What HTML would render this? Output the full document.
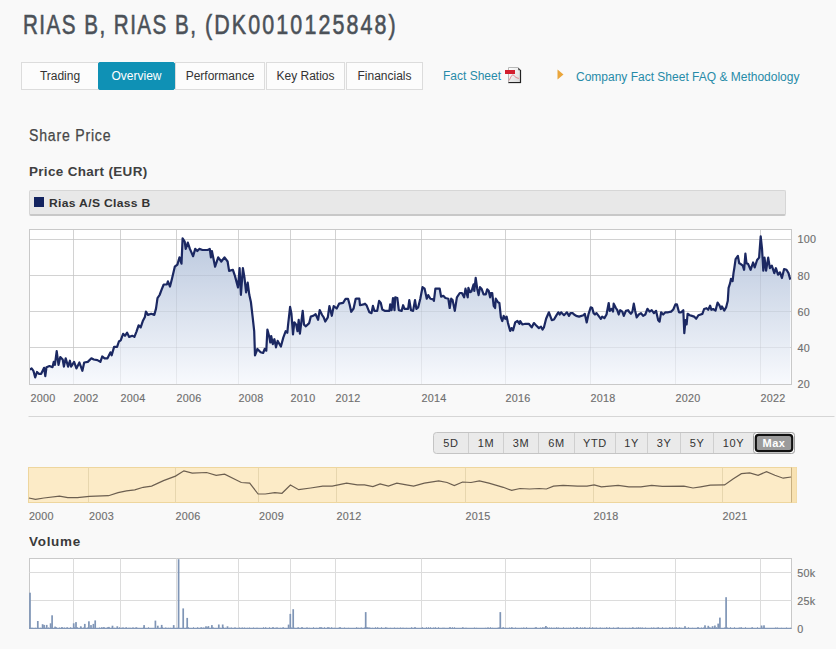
<!DOCTYPE html>
<html><head><meta charset="utf-8">
<style>
html,body{margin:0;padding:0;}
body{width:836px;height:649px;overflow:hidden;background:#f9f9f9;position:relative;font-family:"Liberation Sans",sans-serif;}
.a{position:absolute;white-space:nowrap;line-height:1;}
.ax{font-family:"Liberation Sans",sans-serif;font-size:10px;fill:#707070;letter-spacing:0.2px;stroke:#707070;stroke-width:0.15px;}
.bt{font-family:"Liberation Sans",sans-serif;font-size:11px;fill:#333;letter-spacing:0.6px;}
.mx{font-family:"Liberation Sans",sans-serif;font-size:11px;font-weight:bold;fill:#fff;letter-spacing:0.6px;}
.tab{position:absolute;top:62px;height:28px;box-sizing:border-box;border:1px solid #dcdcdc;background:#fcfcfc;font-size:12px;color:#333;text-align:center;line-height:27px;}
</style></head><body>
<div class="a" id="title" style="left:23px;top:10.5px;font-size:27.5px;color:#4b5158;letter-spacing:1.95px;transform:scaleX(0.75);transform-origin:0 0;-webkit-text-stroke:0.6px #4b5158;">RIAS B, RIAS B,</div><div class="a" style="left:205px;top:10.5px;font-size:27.5px;color:#4b5158;letter-spacing:2.7px;transform:scaleX(0.78);transform-origin:0 0;-webkit-text-stroke:0.6px #4b5158;">(DK0010125848)</div>
<div class="tab" style="left:21px;width:78px;">Trading</div>
<div class="tab" style="left:98px;width:77px;background:#0f91b5;border-color:#0f91b5;color:#fff;border-radius:2px;">Overview</div>
<div class="tab" style="left:175px;width:90px;">Performance</div>
<div class="tab" style="left:266px;width:79px;">Key Ratios</div>
<div class="tab" style="left:346px;width:77px;">Financials</div>
<div class="a" style="left:443px;top:70px;font-size:12px;color:#278ba8;">Fact Sheet</div>
<svg style="position:absolute;left:500px;top:62px" width="26" height="26" viewBox="0 0 26 26">
<defs><linearGradient id="pg" x1="0" y1="0" x2="1" y2="1"><stop offset="0" stop-color="#ffffff"/><stop offset="1" stop-color="#d9d9d9"/></linearGradient></defs>
<path d="M8.5,5.5 H18 L20.5,8 V20.5 H8.5 Z" fill="url(#pg)" stroke="#b8b8b8" stroke-width="1"/>
<path d="M20.5,8 V20.5 H8.5" fill="none" stroke="#222" stroke-width="1.2"/>
<path d="M18,5.5 L20.8,8.3 L18.5,8.3 Z" fill="#333"/>
<rect x="5" y="8" width="10" height="4" fill="#d21f2e"/>
<path d="M9.2,18.4 C10.5,15.5 12,12.5 13.2,12.8 C14,13.2 14.5,15.5 18.8,16.4" fill="none" stroke="#e0707a" stroke-width="0.9"/>
<rect x="8" y="21" width="13" height="1" fill="#ccc" opacity="0.6"/>
</svg>
<svg style="position:absolute;left:556px;top:68px" width="9" height="13" viewBox="0 0 9 13"><path d="M1.5,1.5 L7.5,6.5 L1.5,11.5 Z" fill="#eaa63c"/></svg>
<div class="a" style="left:576px;top:71px;font-size:12px;color:#278ba8;">Company Fact Sheet FAQ &amp; Methodology</div>
<div class="a" style="left:28.5px;top:127.5px;font-size:16px;color:#474747;letter-spacing:0.9px;transform:scaleX(0.88);transform-origin:0 0;-webkit-text-stroke:0.25px #474747;">Share Price</div>
<div class="a" style="left:29px;top:166px;font-size:12px;font-weight:bold;color:#404040;letter-spacing:0.3px;transform:scaleX(1.12);transform-origin:0 0;">Price Chart (EUR)</div>
<div style="position:absolute;left:29px;top:190px;width:757px;height:26px;box-sizing:border-box;background:#e8e8e8;border:1px solid #d6d6d6;border-bottom:2px solid #c8c8c8;border-radius:2px;"></div>
<div style="position:absolute;left:34px;top:197px;width:10px;height:10px;background:#13235f;"></div>
<div class="a" style="left:48.5px;top:198px;font-size:11px;font-weight:bold;color:#333;letter-spacing:0.3px;transform:scaleX(1.1);transform-origin:0 0;">Rias A/S Class B</div>
<div class="a" style="left:29px;top:536px;font-size:12px;font-weight:bold;color:#3a3a3a;letter-spacing:0.65px;transform:scaleX(1.12);transform-origin:0 0;">Volume</div>
<svg style="position:absolute;left:0;top:0" width="836" height="649" viewBox="0 0 836 649">
<defs><linearGradient id="g1" x1="0" y1="236" x2="0" y2="384" gradientUnits="userSpaceOnUse"><stop offset="0" stop-color="#b3c2da"/><stop offset="1" stop-color="#f7f9fd"/></linearGradient></defs>
<rect x="29.5" y="229.5" width="762.0" height="155.0" fill="#fff" stroke="#c9c9c9" stroke-width="1"/>
<line x1="73.5" y1="229.5" x2="73.5" y2="384.5" stroke="#dcdcdc" stroke-width="1"/>
<line x1="120.5" y1="229.5" x2="120.5" y2="384.5" stroke="#dcdcdc" stroke-width="1"/>
<line x1="176.5" y1="229.5" x2="176.5" y2="384.5" stroke="#dcdcdc" stroke-width="1"/>
<line x1="238.5" y1="229.5" x2="238.5" y2="384.5" stroke="#dcdcdc" stroke-width="1"/>
<line x1="290.5" y1="229.5" x2="290.5" y2="384.5" stroke="#dcdcdc" stroke-width="1"/>
<line x1="335.5" y1="229.5" x2="335.5" y2="384.5" stroke="#dcdcdc" stroke-width="1"/>
<line x1="421.5" y1="229.5" x2="421.5" y2="384.5" stroke="#dcdcdc" stroke-width="1"/>
<line x1="505.5" y1="229.5" x2="505.5" y2="384.5" stroke="#dcdcdc" stroke-width="1"/>
<line x1="590.5" y1="229.5" x2="590.5" y2="384.5" stroke="#dcdcdc" stroke-width="1"/>
<line x1="675.5" y1="229.5" x2="675.5" y2="384.5" stroke="#dcdcdc" stroke-width="1"/>
<line x1="760.5" y1="229.5" x2="760.5" y2="384.5" stroke="#dcdcdc" stroke-width="1"/>
<line x1="29.5" y1="239.5" x2="791.5" y2="239.5" stroke="#dcdcdc" stroke-width="1"/>
<line x1="29.5" y1="275.5" x2="791.5" y2="275.5" stroke="#dcdcdc" stroke-width="1"/>
<line x1="29.5" y1="311.5" x2="791.5" y2="311.5" stroke="#dcdcdc" stroke-width="1"/>
<line x1="29.5" y1="347.5" x2="791.5" y2="347.5" stroke="#dcdcdc" stroke-width="1"/>
<path d="M29.8,369.6 L31.6,368.4 L33.4,370.8 L35.2,377.4 L37.0,372.0 L38.8,373.8 L41.2,373.8 L44.1,367.8 L45.3,376.2 L46.5,367.2 L49.5,366.0 L52.5,367.2 L53.7,361.9 L54.9,364.9 L56.7,351.1 L58.5,364.9 L60.3,357.1 L62.7,359.5 L63.9,366.6 L65.7,358.3 L68.1,366.6 L69.9,360.7 L71.1,366.6 L74.1,361.9 L76.4,368.4 L79.4,362.5 L82.4,370.8 L84.2,362.5 L87.8,361.9 L91.4,358.3 L93.8,359.5 L97.4,360.1 L100.4,361.9 L102.2,356.5 L104.6,358.3 L107.5,358.3 L110.5,352.3 L111.7,355.3 L114.1,346.9 L117.1,346.9 L118.9,341.5 L120.7,340.3 L123.1,333.8 L125.0,335.8 L127.1,332.7 L129.2,336.9 L132.3,335.8 L134.4,336.9 L136.5,331.6 L138.6,325.3 L140.7,327.4 L142.8,321.1 L144.9,317.0 L145.9,311.7 L148.0,314.9 L151.2,313.8 L154.3,314.9 L156.0,308.6 L157.5,298.1 L159.6,295.0 L161.6,289.7 L163.7,284.5 L166.9,284.5 L167.9,281.4 L170.0,286.6 L172.1,278.2 L174.8,266.7 L177.4,264.6 L179.5,257.3 L181.5,263.6 L182.6,238.4 L184.7,241.6 L185.7,248.9 L187.8,242.6 L189.9,248.9 L193.1,256.2 L195.2,248.9 L197.3,251.0 L199.3,248.9 L202.5,250.0 L207.7,250.0 L209.8,248.9 L210.9,257.3 L211.9,251.0 L215.1,266.7 L218.2,257.3 L221.3,261.5 L224.5,257.3 L227.6,261.5 L229.1,270.9 L232.9,269.8 L235.0,276.1 L238.0,287.5 L239.6,268.1 L240.9,294.8 L242.9,268.1 L244.5,277.8 L246.1,292.3 L247.7,282.6 L249.3,294.8 L250.9,302.0 L252.6,316.6 L254.2,331.2 L255.0,355.4 L257.4,349.0 L260.6,352.2 L263.1,353.0 L264.7,349.0 L266.3,350.6 L267.4,329.5 L269.1,336.0 L270.3,342.5 L271.2,336.0 L272.8,344.1 L274.4,339.2 L276.0,347.3 L277.6,340.9 L280.9,346.5 L283.3,337.6 L285.7,331.2 L287.3,332.8 L288.1,324.7 L290.1,306.9 L291.4,313.4 L293.0,334.4 L294.3,322.3 L296.2,324.7 L297.5,331.2 L298.7,319.8 L299.9,333.6 L301.4,321.5 L302.7,310.9 L304.0,324.7 L305.9,326.3 L309.2,323.1 L310.8,316.6 L313.2,315.8 L315.6,314.2 L318.1,319.8 L319.7,310.1 L322.1,315.0 L323.7,317.4 L325.3,321.5 L327.8,317.4 L329.4,306.1 L331.8,315.8 L333.7,306.1 L336.7,308.5 L339.1,303.7 L343.1,302.9 L345.6,298.8 L348.0,298.8 L349.6,304.5 L351.2,311.8 L353.6,308.5 L355.7,298.8 L356.4,298.7 L359.3,298.7 L360.0,305.2 L363.6,304.4 L365.0,303.7 L366.5,305.2 L369.4,312.3 L371.5,313.1 L372.9,305.9 L374.4,310.9 L377.2,310.9 L379.1,300.9 L380.8,303.0 L382.3,309.5 L385.1,310.9 L389.4,310.9 L390.2,304.4 L391.6,310.2 L393.0,298.0 L394.5,310.2 L395.2,297.3 L397.3,298.0 L398.8,310.2 L401.6,310.9 L403.1,305.2 L404.5,308.8 L408.1,308.8 L409.3,300.1 L411.0,310.2 L413.1,310.9 L415.0,300.1 L416.4,308.8 L418.2,307.3 L420.3,298.7 L422.5,287.2 L424.6,288.7 L426.8,298.7 L428.2,295.1 L430.4,298.7 L433.2,299.4 L433.9,300.9 L435.4,288.7 L439.7,288.7 L441.1,296.6 L443.3,295.8 L445.4,298.0 L448.3,298.7 L449.7,308.0 L451.2,298.7 L452.6,300.1 L454.8,310.9 L456.9,297.3 L459.8,293.0 L461.9,293.0 L464.1,297.3 L465.5,288.7 L467.7,297.3 L468.4,287.9 L470.0,292.2 L471.4,291.5 L473.6,284.4 L474.3,290.8 L475.7,277.9 L477.2,288.7 L478.6,295.1 L480.0,287.2 L481.5,288.7 L483.6,294.4 L485.8,294.4 L487.2,289.4 L488.7,290.8 L490.1,297.3 L490.8,293.0 L492.2,293.0 L493.7,305.9 L495.1,308.0 L495.8,298.7 L498.0,302.3 L499.4,303.0 L500.9,317.4 L502.3,321.0 L503.7,315.9 L505.2,318.8 L506.6,316.6 L508.0,323.1 L510.2,331.0 L511.6,328.1 L513.1,330.3 L515.2,322.4 L517.4,321.0 L519.5,323.8 L520.2,321.0 L522.4,324.5 L525.3,323.8 L528.8,323.8 L531.7,327.4 L533.9,323.1 L536.0,325.3 L538.9,328.1 L541.0,326.7 L542.5,329.6 L543.9,327.4 L546.1,318.8 L548.9,312.3 L551.8,320.2 L554.0,319.5 L556.1,315.9 L558.3,312.3 L559.7,314.5 L561.1,312.3 L564.0,315.2 L566.9,312.3 L569.0,315.9 L570.5,313.1 L572.6,313.1 L574.1,314.5 L576.2,315.9 L579.1,316.6 L583.4,315.2 L584.8,313.8 L586.7,322.4 L588.6,313.8 L590.7,307.3 L592.2,308.0 L593.6,313.1 L595.0,314.5 L596.5,313.1 L598.6,315.9 L600.8,318.8 L602.2,316.6 L604.4,318.1 L606.5,314.5 L608.7,303.0 L609.7,310.9 L611.6,308.8 L613.0,311.6 L613.7,303.7 L615.9,308.0 L617.3,310.2 L618.7,314.5 L620.2,310.2 L622.3,311.6 L623.8,315.9 L625.9,310.9 L628.1,310.2 L629.5,312.3 L630.9,313.8 L632.4,311.6 L633.8,303.7 L635.2,310.9 L636.7,317.4 L638.8,314.5 L641.0,313.1 L643.1,315.9 L645.3,314.5 L647.4,308.8 L649.6,311.6 L651.7,310.2 L653.9,313.1 L656.1,310.9 L658.2,320.2 L659.6,321.7 L661.1,312.3 L663.2,314.5 L665.4,312.3 L668.2,312.3 L671.1,311.6 L673.3,309.5 L675.4,304.4 L676.9,304.4 L679.0,312.3 L681.2,312.3 L683.3,310.2 L684.3,333.2 L685.5,320.2 L686.6,324.5 L687.6,313.8 L689.8,315.2 L691.9,315.9 L694.1,316.6 L696.2,318.8 L698.4,315.2 L700.0,314.7 L702.4,313.9 L704.1,309.0 L706.5,308.2 L708.2,309.8 L710.1,305.7 L711.4,309.8 L713.1,309.0 L715.5,310.6 L717.6,302.5 L719.6,305.7 L720.9,309.0 L722.0,306.5 L724.2,310.6 L726.1,307.4 L727.8,300.8 L728.6,287.8 L730.2,282.9 L731.0,278.8 L732.6,281.2 L733.5,273.1 L734.3,268.2 L735.6,259.2 L737.9,255.9 L739.2,263.3 L740.8,264.1 L742.8,265.7 L744.1,269.8 L745.4,253.5 L746.5,263.3 L748.2,264.1 L750.6,269.8 L753.1,262.5 L754.7,267.4 L757.1,260.0 L759.1,257.6 L760.7,236.3 L762.0,248.6 L763.3,270.6 L764.5,257.6 L766.1,270.6 L768.2,257.6 L769.9,268.2 L771.8,265.7 L774.3,273.1 L775.9,268.2 L778.0,274.7 L780.0,272.3 L781.9,278.0 L784.1,269.0 L786.5,269.8 L788.5,273.1 L790.3,279.6 L790.3,384 L29.8,384 Z" fill="url(#g1)" fill-opacity="0.9"/>
<line x1="73.5" y1="229.5" x2="73.5" y2="384.5" stroke="#000" stroke-opacity="0.045" stroke-width="1"/>
<line x1="120.5" y1="229.5" x2="120.5" y2="384.5" stroke="#000" stroke-opacity="0.045" stroke-width="1"/>
<line x1="176.5" y1="229.5" x2="176.5" y2="384.5" stroke="#000" stroke-opacity="0.045" stroke-width="1"/>
<line x1="238.5" y1="229.5" x2="238.5" y2="384.5" stroke="#000" stroke-opacity="0.045" stroke-width="1"/>
<line x1="290.5" y1="229.5" x2="290.5" y2="384.5" stroke="#000" stroke-opacity="0.045" stroke-width="1"/>
<line x1="335.5" y1="229.5" x2="335.5" y2="384.5" stroke="#000" stroke-opacity="0.045" stroke-width="1"/>
<line x1="421.5" y1="229.5" x2="421.5" y2="384.5" stroke="#000" stroke-opacity="0.045" stroke-width="1"/>
<line x1="505.5" y1="229.5" x2="505.5" y2="384.5" stroke="#000" stroke-opacity="0.045" stroke-width="1"/>
<line x1="590.5" y1="229.5" x2="590.5" y2="384.5" stroke="#000" stroke-opacity="0.045" stroke-width="1"/>
<line x1="675.5" y1="229.5" x2="675.5" y2="384.5" stroke="#000" stroke-opacity="0.045" stroke-width="1"/>
<line x1="760.5" y1="229.5" x2="760.5" y2="384.5" stroke="#000" stroke-opacity="0.045" stroke-width="1"/>
<line x1="29.5" y1="239.5" x2="791.5" y2="239.5" stroke="#000" stroke-opacity="0.045" stroke-width="1"/>
<line x1="29.5" y1="275.5" x2="791.5" y2="275.5" stroke="#000" stroke-opacity="0.045" stroke-width="1"/>
<line x1="29.5" y1="311.5" x2="791.5" y2="311.5" stroke="#000" stroke-opacity="0.045" stroke-width="1"/>
<line x1="29.5" y1="347.5" x2="791.5" y2="347.5" stroke="#000" stroke-opacity="0.045" stroke-width="1"/>
<path d="M29.8,369.6 L31.6,368.4 L33.4,370.8 L35.2,377.4 L37.0,372.0 L38.8,373.8 L41.2,373.8 L44.1,367.8 L45.3,376.2 L46.5,367.2 L49.5,366.0 L52.5,367.2 L53.7,361.9 L54.9,364.9 L56.7,351.1 L58.5,364.9 L60.3,357.1 L62.7,359.5 L63.9,366.6 L65.7,358.3 L68.1,366.6 L69.9,360.7 L71.1,366.6 L74.1,361.9 L76.4,368.4 L79.4,362.5 L82.4,370.8 L84.2,362.5 L87.8,361.9 L91.4,358.3 L93.8,359.5 L97.4,360.1 L100.4,361.9 L102.2,356.5 L104.6,358.3 L107.5,358.3 L110.5,352.3 L111.7,355.3 L114.1,346.9 L117.1,346.9 L118.9,341.5 L120.7,340.3 L123.1,333.8 L125.0,335.8 L127.1,332.7 L129.2,336.9 L132.3,335.8 L134.4,336.9 L136.5,331.6 L138.6,325.3 L140.7,327.4 L142.8,321.1 L144.9,317.0 L145.9,311.7 L148.0,314.9 L151.2,313.8 L154.3,314.9 L156.0,308.6 L157.5,298.1 L159.6,295.0 L161.6,289.7 L163.7,284.5 L166.9,284.5 L167.9,281.4 L170.0,286.6 L172.1,278.2 L174.8,266.7 L177.4,264.6 L179.5,257.3 L181.5,263.6 L182.6,238.4 L184.7,241.6 L185.7,248.9 L187.8,242.6 L189.9,248.9 L193.1,256.2 L195.2,248.9 L197.3,251.0 L199.3,248.9 L202.5,250.0 L207.7,250.0 L209.8,248.9 L210.9,257.3 L211.9,251.0 L215.1,266.7 L218.2,257.3 L221.3,261.5 L224.5,257.3 L227.6,261.5 L229.1,270.9 L232.9,269.8 L235.0,276.1 L238.0,287.5 L239.6,268.1 L240.9,294.8 L242.9,268.1 L244.5,277.8 L246.1,292.3 L247.7,282.6 L249.3,294.8 L250.9,302.0 L252.6,316.6 L254.2,331.2 L255.0,355.4 L257.4,349.0 L260.6,352.2 L263.1,353.0 L264.7,349.0 L266.3,350.6 L267.4,329.5 L269.1,336.0 L270.3,342.5 L271.2,336.0 L272.8,344.1 L274.4,339.2 L276.0,347.3 L277.6,340.9 L280.9,346.5 L283.3,337.6 L285.7,331.2 L287.3,332.8 L288.1,324.7 L290.1,306.9 L291.4,313.4 L293.0,334.4 L294.3,322.3 L296.2,324.7 L297.5,331.2 L298.7,319.8 L299.9,333.6 L301.4,321.5 L302.7,310.9 L304.0,324.7 L305.9,326.3 L309.2,323.1 L310.8,316.6 L313.2,315.8 L315.6,314.2 L318.1,319.8 L319.7,310.1 L322.1,315.0 L323.7,317.4 L325.3,321.5 L327.8,317.4 L329.4,306.1 L331.8,315.8 L333.7,306.1 L336.7,308.5 L339.1,303.7 L343.1,302.9 L345.6,298.8 L348.0,298.8 L349.6,304.5 L351.2,311.8 L353.6,308.5 L355.7,298.8 L356.4,298.7 L359.3,298.7 L360.0,305.2 L363.6,304.4 L365.0,303.7 L366.5,305.2 L369.4,312.3 L371.5,313.1 L372.9,305.9 L374.4,310.9 L377.2,310.9 L379.1,300.9 L380.8,303.0 L382.3,309.5 L385.1,310.9 L389.4,310.9 L390.2,304.4 L391.6,310.2 L393.0,298.0 L394.5,310.2 L395.2,297.3 L397.3,298.0 L398.8,310.2 L401.6,310.9 L403.1,305.2 L404.5,308.8 L408.1,308.8 L409.3,300.1 L411.0,310.2 L413.1,310.9 L415.0,300.1 L416.4,308.8 L418.2,307.3 L420.3,298.7 L422.5,287.2 L424.6,288.7 L426.8,298.7 L428.2,295.1 L430.4,298.7 L433.2,299.4 L433.9,300.9 L435.4,288.7 L439.7,288.7 L441.1,296.6 L443.3,295.8 L445.4,298.0 L448.3,298.7 L449.7,308.0 L451.2,298.7 L452.6,300.1 L454.8,310.9 L456.9,297.3 L459.8,293.0 L461.9,293.0 L464.1,297.3 L465.5,288.7 L467.7,297.3 L468.4,287.9 L470.0,292.2 L471.4,291.5 L473.6,284.4 L474.3,290.8 L475.7,277.9 L477.2,288.7 L478.6,295.1 L480.0,287.2 L481.5,288.7 L483.6,294.4 L485.8,294.4 L487.2,289.4 L488.7,290.8 L490.1,297.3 L490.8,293.0 L492.2,293.0 L493.7,305.9 L495.1,308.0 L495.8,298.7 L498.0,302.3 L499.4,303.0 L500.9,317.4 L502.3,321.0 L503.7,315.9 L505.2,318.8 L506.6,316.6 L508.0,323.1 L510.2,331.0 L511.6,328.1 L513.1,330.3 L515.2,322.4 L517.4,321.0 L519.5,323.8 L520.2,321.0 L522.4,324.5 L525.3,323.8 L528.8,323.8 L531.7,327.4 L533.9,323.1 L536.0,325.3 L538.9,328.1 L541.0,326.7 L542.5,329.6 L543.9,327.4 L546.1,318.8 L548.9,312.3 L551.8,320.2 L554.0,319.5 L556.1,315.9 L558.3,312.3 L559.7,314.5 L561.1,312.3 L564.0,315.2 L566.9,312.3 L569.0,315.9 L570.5,313.1 L572.6,313.1 L574.1,314.5 L576.2,315.9 L579.1,316.6 L583.4,315.2 L584.8,313.8 L586.7,322.4 L588.6,313.8 L590.7,307.3 L592.2,308.0 L593.6,313.1 L595.0,314.5 L596.5,313.1 L598.6,315.9 L600.8,318.8 L602.2,316.6 L604.4,318.1 L606.5,314.5 L608.7,303.0 L609.7,310.9 L611.6,308.8 L613.0,311.6 L613.7,303.7 L615.9,308.0 L617.3,310.2 L618.7,314.5 L620.2,310.2 L622.3,311.6 L623.8,315.9 L625.9,310.9 L628.1,310.2 L629.5,312.3 L630.9,313.8 L632.4,311.6 L633.8,303.7 L635.2,310.9 L636.7,317.4 L638.8,314.5 L641.0,313.1 L643.1,315.9 L645.3,314.5 L647.4,308.8 L649.6,311.6 L651.7,310.2 L653.9,313.1 L656.1,310.9 L658.2,320.2 L659.6,321.7 L661.1,312.3 L663.2,314.5 L665.4,312.3 L668.2,312.3 L671.1,311.6 L673.3,309.5 L675.4,304.4 L676.9,304.4 L679.0,312.3 L681.2,312.3 L683.3,310.2 L684.3,333.2 L685.5,320.2 L686.6,324.5 L687.6,313.8 L689.8,315.2 L691.9,315.9 L694.1,316.6 L696.2,318.8 L698.4,315.2 L700.0,314.7 L702.4,313.9 L704.1,309.0 L706.5,308.2 L708.2,309.8 L710.1,305.7 L711.4,309.8 L713.1,309.0 L715.5,310.6 L717.6,302.5 L719.6,305.7 L720.9,309.0 L722.0,306.5 L724.2,310.6 L726.1,307.4 L727.8,300.8 L728.6,287.8 L730.2,282.9 L731.0,278.8 L732.6,281.2 L733.5,273.1 L734.3,268.2 L735.6,259.2 L737.9,255.9 L739.2,263.3 L740.8,264.1 L742.8,265.7 L744.1,269.8 L745.4,253.5 L746.5,263.3 L748.2,264.1 L750.6,269.8 L753.1,262.5 L754.7,267.4 L757.1,260.0 L759.1,257.6 L760.7,236.3 L762.0,248.6 L763.3,270.6 L764.5,257.6 L766.1,270.6 L768.2,257.6 L769.9,268.2 L771.8,265.7 L774.3,273.1 L775.9,268.2 L778.0,274.7 L780.0,272.3 L781.9,278.0 L784.1,269.0 L786.5,269.8 L788.5,273.1 L790.3,279.6" fill="none" stroke="#1b2862" stroke-width="2.2" stroke-linejoin="round"/>
<rect x="29.5" y="229.5" width="762.0" height="155.0" fill="none" stroke="#c9c9c9" stroke-width="1"/>
<text transform="translate(30.5,401.8) scale(1.08,1)" class="ax">2000</text>
<text transform="translate(73.5,401.8) scale(1.08,1)" class="ax">2002</text>
<text transform="translate(120.5,401.8) scale(1.08,1)" class="ax">2004</text>
<text transform="translate(176.5,401.8) scale(1.08,1)" class="ax">2006</text>
<text transform="translate(238.5,401.8) scale(1.08,1)" class="ax">2008</text>
<text transform="translate(290.5,401.8) scale(1.08,1)" class="ax">2010</text>
<text transform="translate(335.5,401.8) scale(1.08,1)" class="ax">2012</text>
<text transform="translate(421.5,401.8) scale(1.08,1)" class="ax">2014</text>
<text transform="translate(505.5,401.8) scale(1.08,1)" class="ax">2016</text>
<text transform="translate(590.5,401.8) scale(1.08,1)" class="ax">2018</text>
<text transform="translate(675.5,401.8) scale(1.08,1)" class="ax">2020</text>
<text transform="translate(760.5,401.8) scale(1.08,1)" class="ax">2022</text>
<text transform="translate(797.5,243.3) scale(1.08,1)" class="ax">100</text>
<text transform="translate(797.5,279.6) scale(1.08,1)" class="ax">80</text>
<text transform="translate(797.5,315.9) scale(1.08,1)" class="ax">60</text>
<text transform="translate(797.5,351.9) scale(1.08,1)" class="ax">40</text>
<text transform="translate(797.5,388) scale(1.08,1)" class="ax">20</text>
<line x1="28.5" y1="416.5" x2="834.5" y2="416.5" stroke="#d6d6d6" stroke-width="1"/>
<rect x="28.5" y="467.5" width="768.0" height="35.0" fill="#fcebc7" stroke="#eed69e" stroke-width="1"/>
<rect x="791" y="467.5" width="5.5" height="35.0" fill="#f8e2b2"/>
<line x1="791.5" y1="467.5" x2="791.5" y2="502.5" stroke="#c8b080" stroke-width="1"/>
<line x1="88.5" y1="467.5" x2="88.5" y2="502.5" stroke="#e7d6ae" stroke-width="1"/>
<line x1="175.5" y1="467.5" x2="175.5" y2="502.5" stroke="#e7d6ae" stroke-width="1"/>
<line x1="258.5" y1="467.5" x2="258.5" y2="502.5" stroke="#e7d6ae" stroke-width="1"/>
<line x1="336.5" y1="467.5" x2="336.5" y2="502.5" stroke="#e7d6ae" stroke-width="1"/>
<line x1="465.5" y1="467.5" x2="465.5" y2="502.5" stroke="#e7d6ae" stroke-width="1"/>
<line x1="593.5" y1="467.5" x2="593.5" y2="502.5" stroke="#e7d6ae" stroke-width="1"/>
<line x1="722.5" y1="467.5" x2="722.5" y2="502.5" stroke="#e7d6ae" stroke-width="1"/>
<path d="M28.9,498.0 L35.5,499.3 L43.9,498.0 L59.5,496.1 L67.8,497.6 L77.4,497.6 L89.4,496.4 L108.5,495.7 L118.1,492.6 L126.5,490.9 L134.8,489.9 L143.2,487.3 L151.6,486.1 L163.5,480.6 L175.5,476.1 L183.9,470.8 L192.2,473.2 L206.6,472.5 L216.2,475.3 L224.6,474.1 L241.3,482.5 L249.7,483.2 L258.1,494.0 L265.2,494.0 L274.8,492.6 L282.0,493.3 L290.4,485.1 L298.7,489.7 L310.7,488.0 L322.7,486.1 L332.2,486.1 L338.2,484.9 L346.6,483.2 L357.3,484.9 L364.5,484.9 L372.9,486.6 L380.1,483.9 L388.4,486.1 L396.8,483.2 L406.4,484.9 L413.6,486.1 L424.4,483.2 L438.7,480.8 L447.1,482.5 L454.3,485.6 L462.6,482.0 L471.0,482.5 L479.4,480.8 L488.9,483.2 L503.3,487.3 L511.7,490.4 L520.0,488.5 L529.6,489.0 L539.2,488.5 L546.4,489.0 L553.5,486.1 L563.1,485.4 L577.5,486.1 L587.0,486.1 L594.2,484.9 L601.4,486.8 L618.2,485.4 L628.9,486.8 L640.9,486.8 L651.7,485.4 L662.4,486.3 L683.9,486.1 L693.0,488.0 L700.7,486.8 L710.3,485.1 L724.6,484.9 L733.0,478.9 L741.4,473.7 L749.7,472.9 L758.1,475.3 L766.5,471.7 L774.9,475.3 L783.2,478.2 L791.1,477.0" fill="none" stroke="#6c5f50" stroke-width="1.2"/>
<text transform="translate(28.9,520) scale(1.08,1)" class="ax">2000</text>
<text transform="translate(89,520) scale(1.08,1)" class="ax">2003</text>
<text transform="translate(175.5,520) scale(1.08,1)" class="ax">2006</text>
<text transform="translate(259,520) scale(1.08,1)" class="ax">2009</text>
<text transform="translate(336.5,520) scale(1.08,1)" class="ax">2012</text>
<text transform="translate(465.5,520) scale(1.08,1)" class="ax">2015</text>
<text transform="translate(593.5,520) scale(1.08,1)" class="ax">2018</text>
<text transform="translate(722.5,520) scale(1.08,1)" class="ax">2021</text>
<rect x="29.5" y="558.5" width="762.0" height="70.0" fill="#fff" stroke="#c9c9c9" stroke-width="1"/>
<line x1="73.5" y1="558.5" x2="73.5" y2="628.5" stroke="#dcdcdc" stroke-width="1"/>
<line x1="120.5" y1="558.5" x2="120.5" y2="628.5" stroke="#dcdcdc" stroke-width="1"/>
<line x1="176.5" y1="558.5" x2="176.5" y2="628.5" stroke="#dcdcdc" stroke-width="1"/>
<line x1="238.5" y1="558.5" x2="238.5" y2="628.5" stroke="#dcdcdc" stroke-width="1"/>
<line x1="290.5" y1="558.5" x2="290.5" y2="628.5" stroke="#dcdcdc" stroke-width="1"/>
<line x1="335.5" y1="558.5" x2="335.5" y2="628.5" stroke="#dcdcdc" stroke-width="1"/>
<line x1="421.5" y1="558.5" x2="421.5" y2="628.5" stroke="#dcdcdc" stroke-width="1"/>
<line x1="505.5" y1="558.5" x2="505.5" y2="628.5" stroke="#dcdcdc" stroke-width="1"/>
<line x1="590.5" y1="558.5" x2="590.5" y2="628.5" stroke="#dcdcdc" stroke-width="1"/>
<line x1="675.5" y1="558.5" x2="675.5" y2="628.5" stroke="#dcdcdc" stroke-width="1"/>
<line x1="760.5" y1="558.5" x2="760.5" y2="628.5" stroke="#dcdcdc" stroke-width="1"/>
<line x1="29.5" y1="572.5" x2="791.5" y2="572.5" stroke="#dcdcdc" stroke-width="1"/>
<line x1="29.5" y1="600.5" x2="791.5" y2="600.5" stroke="#dcdcdc" stroke-width="1"/>
<rect x="30" y="628.2" width="1" height="0.8" fill="#8a9ebe"/>
<rect x="31" y="627.8" width="1" height="1.2" fill="#8a9ebe"/>
<rect x="32" y="627.8" width="1" height="1.2" fill="#8a9ebe"/>
<rect x="33" y="628.2" width="1" height="0.8" fill="#8a9ebe"/>
<rect x="34" y="628.0" width="1" height="1" fill="#8a9ebe"/>
<rect x="35" y="627.8" width="1" height="1.2" fill="#8a9ebe"/>
<rect x="36" y="628.0" width="1" height="1" fill="#8a9ebe"/>
<rect x="37" y="627.5" width="1" height="1.5" fill="#8a9ebe"/>
<rect x="38" y="627.8" width="1" height="1.2" fill="#8a9ebe"/>
<rect x="39" y="628.4" width="1" height="0.6" fill="#8a9ebe"/>
<rect x="40" y="627.8" width="1" height="1.2" fill="#8a9ebe"/>
<rect x="41" y="628.4" width="1" height="0.6" fill="#8a9ebe"/>
<rect x="42" y="627.2" width="1" height="1.8" fill="#8a9ebe"/>
<rect x="43" y="628.0" width="1" height="1" fill="#8a9ebe"/>
<rect x="44" y="628.0" width="1" height="1" fill="#8a9ebe"/>
<rect x="45" y="627.8" width="1" height="1.2" fill="#8a9ebe"/>
<rect x="46" y="628.2" width="1" height="0.8" fill="#8a9ebe"/>
<rect x="47" y="628.2" width="1" height="0.8" fill="#8a9ebe"/>
<rect x="48" y="627.5" width="1" height="1.5" fill="#8a9ebe"/>
<rect x="49" y="628.0" width="1" height="1" fill="#8a9ebe"/>
<rect x="50" y="627.8" width="1" height="1.2" fill="#8a9ebe"/>
<rect x="51" y="627.2" width="1" height="1.8" fill="#8a9ebe"/>
<rect x="52" y="627.8" width="1" height="1.2" fill="#8a9ebe"/>
<rect x="53" y="628.0" width="1" height="1" fill="#8a9ebe"/>
<rect x="54" y="628.0" width="1" height="1" fill="#8a9ebe"/>
<rect x="55" y="627.5" width="1" height="1.5" fill="#8a9ebe"/>
<rect x="56" y="627.2" width="1" height="1.8" fill="#8a9ebe"/>
<rect x="57" y="628.2" width="1" height="0.8" fill="#8a9ebe"/>
<rect x="58" y="628.2" width="1" height="0.8" fill="#8a9ebe"/>
<rect x="59" y="627.5" width="1" height="1.5" fill="#8a9ebe"/>
<rect x="60" y="628.2" width="1" height="0.8" fill="#8a9ebe"/>
<rect x="61" y="627.2" width="1" height="1.8" fill="#8a9ebe"/>
<rect x="62" y="627.8" width="1" height="1.2" fill="#8a9ebe"/>
<rect x="63" y="628.0" width="1" height="1" fill="#8a9ebe"/>
<rect x="64" y="627.5" width="1" height="1.5" fill="#8a9ebe"/>
<rect x="65" y="628.4" width="1" height="0.6" fill="#8a9ebe"/>
<rect x="66" y="627.5" width="1" height="1.5" fill="#8a9ebe"/>
<rect x="67" y="627.2" width="1" height="1.8" fill="#8a9ebe"/>
<rect x="68" y="628.4" width="1" height="0.6" fill="#8a9ebe"/>
<rect x="69" y="628.2" width="1" height="0.8" fill="#8a9ebe"/>
<rect x="70" y="627.2" width="1" height="1.8" fill="#8a9ebe"/>
<rect x="71" y="627.8" width="1" height="1.2" fill="#8a9ebe"/>
<rect x="72" y="628.4" width="1" height="0.6" fill="#8a9ebe"/>
<rect x="73" y="628.0" width="1" height="1" fill="#8a9ebe"/>
<rect x="74" y="627.2" width="1" height="1.8" fill="#8a9ebe"/>
<rect x="75" y="628.4" width="1" height="0.6" fill="#8a9ebe"/>
<rect x="76" y="627.2" width="1" height="1.8" fill="#8a9ebe"/>
<rect x="77" y="627.2" width="1" height="1.8" fill="#8a9ebe"/>
<rect x="78" y="628.0" width="1" height="1" fill="#8a9ebe"/>
<rect x="79" y="628.0" width="1" height="1" fill="#8a9ebe"/>
<rect x="80" y="627.8" width="1" height="1.2" fill="#8a9ebe"/>
<rect x="81" y="627.5" width="1" height="1.5" fill="#8a9ebe"/>
<rect x="82" y="628.0" width="1" height="1" fill="#8a9ebe"/>
<rect x="83" y="627.5" width="1" height="1.5" fill="#8a9ebe"/>
<rect x="84" y="627.2" width="1" height="1.8" fill="#8a9ebe"/>
<rect x="85" y="628.0" width="1" height="1" fill="#8a9ebe"/>
<rect x="86" y="628.0" width="1" height="1" fill="#8a9ebe"/>
<rect x="87" y="627.5" width="1" height="1.5" fill="#8a9ebe"/>
<rect x="88" y="627.2" width="1" height="1.8" fill="#8a9ebe"/>
<rect x="89" y="627.8" width="1" height="1.2" fill="#8a9ebe"/>
<rect x="90" y="628.0" width="1" height="1" fill="#8a9ebe"/>
<rect x="91" y="628.2" width="1" height="0.8" fill="#8a9ebe"/>
<rect x="92" y="628.0" width="1" height="1" fill="#8a9ebe"/>
<rect x="93" y="628.4" width="1" height="0.6" fill="#8a9ebe"/>
<rect x="94" y="628.4" width="1" height="0.6" fill="#8a9ebe"/>
<rect x="95" y="628.2" width="1" height="0.8" fill="#8a9ebe"/>
<rect x="96" y="628.0" width="1" height="1" fill="#8a9ebe"/>
<rect x="97" y="628.2" width="1" height="0.8" fill="#8a9ebe"/>
<rect x="98" y="628.0" width="1" height="1" fill="#8a9ebe"/>
<rect x="99" y="627.5" width="1" height="1.5" fill="#8a9ebe"/>
<rect x="100" y="628.0" width="1" height="1" fill="#8a9ebe"/>
<rect x="101" y="627.2" width="1" height="1.8" fill="#8a9ebe"/>
<rect x="102" y="627.5" width="1" height="1.5" fill="#8a9ebe"/>
<rect x="103" y="627.2" width="1" height="1.8" fill="#8a9ebe"/>
<rect x="104" y="628.0" width="1" height="1" fill="#8a9ebe"/>
<rect x="105" y="628.0" width="1" height="1" fill="#8a9ebe"/>
<rect x="106" y="627.8" width="1" height="1.2" fill="#8a9ebe"/>
<rect x="107" y="627.2" width="1" height="1.8" fill="#8a9ebe"/>
<rect x="108" y="628.0" width="1" height="1" fill="#8a9ebe"/>
<rect x="109" y="627.8" width="1" height="1.2" fill="#8a9ebe"/>
<rect x="110" y="628.0" width="1" height="1" fill="#8a9ebe"/>
<rect x="111" y="627.8" width="1" height="1.2" fill="#8a9ebe"/>
<rect x="112" y="627.8" width="1" height="1.2" fill="#8a9ebe"/>
<rect x="113" y="628.0" width="1" height="1" fill="#8a9ebe"/>
<rect x="114" y="627.8" width="1" height="1.2" fill="#8a9ebe"/>
<rect x="115" y="628.2" width="1" height="0.8" fill="#8a9ebe"/>
<rect x="116" y="628.0" width="1" height="1" fill="#8a9ebe"/>
<rect x="117" y="627.5" width="1" height="1.5" fill="#8a9ebe"/>
<rect x="118" y="628.4" width="1" height="0.6" fill="#8a9ebe"/>
<rect x="119" y="627.2" width="1" height="1.8" fill="#8a9ebe"/>
<rect x="120" y="628.0" width="1" height="1" fill="#8a9ebe"/>
<rect x="121" y="627.8" width="1" height="1.2" fill="#8a9ebe"/>
<rect x="122" y="627.5" width="1" height="1.5" fill="#8a9ebe"/>
<rect x="123" y="627.5" width="1" height="1.5" fill="#8a9ebe"/>
<rect x="124" y="628.2" width="1" height="0.8" fill="#8a9ebe"/>
<rect x="125" y="627.5" width="1" height="1.5" fill="#8a9ebe"/>
<rect x="126" y="627.2" width="1" height="1.8" fill="#8a9ebe"/>
<rect x="127" y="628.0" width="1" height="1" fill="#8a9ebe"/>
<rect x="128" y="627.8" width="1" height="1.2" fill="#8a9ebe"/>
<rect x="129" y="627.8" width="1" height="1.2" fill="#8a9ebe"/>
<rect x="130" y="627.8" width="1" height="1.2" fill="#8a9ebe"/>
<rect x="131" y="628.4" width="1" height="0.6" fill="#8a9ebe"/>
<rect x="132" y="627.5" width="1" height="1.5" fill="#8a9ebe"/>
<rect x="133" y="627.5" width="1" height="1.5" fill="#8a9ebe"/>
<rect x="134" y="628.2" width="1" height="0.8" fill="#8a9ebe"/>
<rect x="135" y="627.5" width="1" height="1.5" fill="#8a9ebe"/>
<rect x="136" y="627.2" width="1" height="1.8" fill="#8a9ebe"/>
<rect x="137" y="627.8" width="1" height="1.2" fill="#8a9ebe"/>
<rect x="138" y="628.0" width="1" height="1" fill="#8a9ebe"/>
<rect x="139" y="628.0" width="1" height="1" fill="#8a9ebe"/>
<rect x="140" y="628.4" width="1" height="0.6" fill="#8a9ebe"/>
<rect x="141" y="628.4" width="1" height="0.6" fill="#8a9ebe"/>
<rect x="142" y="628.0" width="1" height="1" fill="#8a9ebe"/>
<rect x="143" y="627.2" width="1" height="1.8" fill="#8a9ebe"/>
<rect x="144" y="627.5" width="1" height="1.5" fill="#8a9ebe"/>
<rect x="145" y="628.0" width="1" height="1" fill="#8a9ebe"/>
<rect x="146" y="628.4" width="1" height="0.6" fill="#8a9ebe"/>
<rect x="147" y="628.0" width="1" height="1" fill="#8a9ebe"/>
<rect x="148" y="627.2" width="1" height="1.8" fill="#8a9ebe"/>
<rect x="149" y="628.4" width="1" height="0.6" fill="#8a9ebe"/>
<rect x="150" y="628.0" width="1" height="1" fill="#8a9ebe"/>
<rect x="151" y="628.2" width="1" height="0.8" fill="#8a9ebe"/>
<rect x="152" y="628.4" width="1" height="0.6" fill="#8a9ebe"/>
<rect x="153" y="628.0" width="1" height="1" fill="#8a9ebe"/>
<rect x="154" y="628.0" width="1" height="1" fill="#8a9ebe"/>
<rect x="155" y="627.2" width="1" height="1.8" fill="#8a9ebe"/>
<rect x="156" y="628.0" width="1" height="1" fill="#8a9ebe"/>
<rect x="157" y="627.2" width="1" height="1.8" fill="#8a9ebe"/>
<rect x="158" y="628.4" width="1" height="0.6" fill="#8a9ebe"/>
<rect x="159" y="628.4" width="1" height="0.6" fill="#8a9ebe"/>
<rect x="160" y="627.8" width="1" height="1.2" fill="#8a9ebe"/>
<rect x="161" y="627.8" width="1" height="1.2" fill="#8a9ebe"/>
<rect x="162" y="627.2" width="1" height="1.8" fill="#8a9ebe"/>
<rect x="163" y="628.4" width="1" height="0.6" fill="#8a9ebe"/>
<rect x="164" y="628.0" width="1" height="1" fill="#8a9ebe"/>
<rect x="165" y="627.5" width="1" height="1.5" fill="#8a9ebe"/>
<rect x="166" y="627.8" width="1" height="1.2" fill="#8a9ebe"/>
<rect x="167" y="628.0" width="1" height="1" fill="#8a9ebe"/>
<rect x="168" y="627.8" width="1" height="1.2" fill="#8a9ebe"/>
<rect x="169" y="628.0" width="1" height="1" fill="#8a9ebe"/>
<rect x="170" y="627.8" width="1" height="1.2" fill="#8a9ebe"/>
<rect x="171" y="628.2" width="1" height="0.8" fill="#8a9ebe"/>
<rect x="172" y="628.4" width="1" height="0.6" fill="#8a9ebe"/>
<rect x="173" y="628.0" width="1" height="1" fill="#8a9ebe"/>
<rect x="174" y="628.4" width="1" height="0.6" fill="#8a9ebe"/>
<rect x="175" y="628.4" width="1" height="0.6" fill="#8a9ebe"/>
<rect x="176" y="628.4" width="1" height="0.6" fill="#8a9ebe"/>
<rect x="177" y="627.8" width="1" height="1.2" fill="#8a9ebe"/>
<rect x="178" y="627.8" width="1" height="1.2" fill="#8a9ebe"/>
<rect x="179" y="628.4" width="1" height="0.6" fill="#8a9ebe"/>
<rect x="180" y="628.2" width="1" height="0.8" fill="#8a9ebe"/>
<rect x="181" y="628.0" width="1" height="1" fill="#8a9ebe"/>
<rect x="182" y="628.0" width="1" height="1" fill="#8a9ebe"/>
<rect x="183" y="627.8" width="1" height="1.2" fill="#8a9ebe"/>
<rect x="184" y="628.0" width="1" height="1" fill="#8a9ebe"/>
<rect x="185" y="628.2" width="1" height="0.8" fill="#8a9ebe"/>
<rect x="186" y="627.5" width="1" height="1.5" fill="#8a9ebe"/>
<rect x="187" y="628.4" width="1" height="0.6" fill="#8a9ebe"/>
<rect x="188" y="627.2" width="1" height="1.8" fill="#8a9ebe"/>
<rect x="189" y="628.0" width="1" height="1" fill="#8a9ebe"/>
<rect x="190" y="628.0" width="1" height="1" fill="#8a9ebe"/>
<rect x="191" y="628.0" width="1" height="1" fill="#8a9ebe"/>
<rect x="192" y="628.2" width="1" height="0.8" fill="#8a9ebe"/>
<rect x="193" y="627.2" width="1" height="1.8" fill="#8a9ebe"/>
<rect x="194" y="628.0" width="1" height="1" fill="#8a9ebe"/>
<rect x="195" y="628.0" width="1" height="1" fill="#8a9ebe"/>
<rect x="196" y="628.0" width="1" height="1" fill="#8a9ebe"/>
<rect x="197" y="627.2" width="1" height="1.8" fill="#8a9ebe"/>
<rect x="198" y="627.8" width="1" height="1.2" fill="#8a9ebe"/>
<rect x="199" y="628.0" width="1" height="1" fill="#8a9ebe"/>
<rect x="200" y="627.5" width="1" height="1.5" fill="#8a9ebe"/>
<rect x="201" y="627.2" width="1" height="1.8" fill="#8a9ebe"/>
<rect x="202" y="627.8" width="1" height="1.2" fill="#8a9ebe"/>
<rect x="203" y="627.5" width="1" height="1.5" fill="#8a9ebe"/>
<rect x="204" y="627.8" width="1" height="1.2" fill="#8a9ebe"/>
<rect x="205" y="628.4" width="1" height="0.6" fill="#8a9ebe"/>
<rect x="206" y="627.8" width="1" height="1.2" fill="#8a9ebe"/>
<rect x="207" y="627.2" width="1" height="1.8" fill="#8a9ebe"/>
<rect x="208" y="627.8" width="1" height="1.2" fill="#8a9ebe"/>
<rect x="209" y="628.0" width="1" height="1" fill="#8a9ebe"/>
<rect x="210" y="628.0" width="1" height="1" fill="#8a9ebe"/>
<rect x="211" y="627.5" width="1" height="1.5" fill="#8a9ebe"/>
<rect x="212" y="627.5" width="1" height="1.5" fill="#8a9ebe"/>
<rect x="213" y="627.5" width="1" height="1.5" fill="#8a9ebe"/>
<rect x="214" y="628.2" width="1" height="0.8" fill="#8a9ebe"/>
<rect x="215" y="628.0" width="1" height="1" fill="#8a9ebe"/>
<rect x="216" y="628.0" width="1" height="1" fill="#8a9ebe"/>
<rect x="217" y="628.0" width="1" height="1" fill="#8a9ebe"/>
<rect x="218" y="627.8" width="1" height="1.2" fill="#8a9ebe"/>
<rect x="219" y="628.0" width="1" height="1" fill="#8a9ebe"/>
<rect x="220" y="627.8" width="1" height="1.2" fill="#8a9ebe"/>
<rect x="221" y="628.0" width="1" height="1" fill="#8a9ebe"/>
<rect x="222" y="628.4" width="1" height="0.6" fill="#8a9ebe"/>
<rect x="223" y="627.2" width="1" height="1.8" fill="#8a9ebe"/>
<rect x="224" y="628.0" width="1" height="1" fill="#8a9ebe"/>
<rect x="225" y="627.8" width="1" height="1.2" fill="#8a9ebe"/>
<rect x="226" y="628.0" width="1" height="1" fill="#8a9ebe"/>
<rect x="227" y="628.4" width="1" height="0.6" fill="#8a9ebe"/>
<rect x="228" y="628.0" width="1" height="1" fill="#8a9ebe"/>
<rect x="229" y="627.8" width="1" height="1.2" fill="#8a9ebe"/>
<rect x="230" y="627.8" width="1" height="1.2" fill="#8a9ebe"/>
<rect x="231" y="627.5" width="1" height="1.5" fill="#8a9ebe"/>
<rect x="232" y="628.2" width="1" height="0.8" fill="#8a9ebe"/>
<rect x="233" y="628.4" width="1" height="0.6" fill="#8a9ebe"/>
<rect x="234" y="627.5" width="1" height="1.5" fill="#8a9ebe"/>
<rect x="235" y="627.5" width="1" height="1.5" fill="#8a9ebe"/>
<rect x="236" y="628.0" width="1" height="1" fill="#8a9ebe"/>
<rect x="237" y="628.0" width="1" height="1" fill="#8a9ebe"/>
<rect x="238" y="628.0" width="1" height="1" fill="#8a9ebe"/>
<rect x="239" y="627.5" width="1" height="1.5" fill="#8a9ebe"/>
<rect x="240" y="628.0" width="1" height="1" fill="#8a9ebe"/>
<rect x="241" y="627.8" width="1" height="1.2" fill="#8a9ebe"/>
<rect x="242" y="627.5" width="1" height="1.5" fill="#8a9ebe"/>
<rect x="243" y="628.0" width="1" height="1" fill="#8a9ebe"/>
<rect x="244" y="627.5" width="1" height="1.5" fill="#8a9ebe"/>
<rect x="245" y="628.0" width="1" height="1" fill="#8a9ebe"/>
<rect x="246" y="628.4" width="1" height="0.6" fill="#8a9ebe"/>
<rect x="247" y="627.8" width="1" height="1.2" fill="#8a9ebe"/>
<rect x="248" y="628.4" width="1" height="0.6" fill="#8a9ebe"/>
<rect x="249" y="627.5" width="1" height="1.5" fill="#8a9ebe"/>
<rect x="250" y="628.4" width="1" height="0.6" fill="#8a9ebe"/>
<rect x="251" y="628.0" width="1" height="1" fill="#8a9ebe"/>
<rect x="252" y="628.0" width="1" height="1" fill="#8a9ebe"/>
<rect x="253" y="627.5" width="1" height="1.5" fill="#8a9ebe"/>
<rect x="254" y="628.0" width="1" height="1" fill="#8a9ebe"/>
<rect x="255" y="628.0" width="1" height="1" fill="#8a9ebe"/>
<rect x="256" y="627.8" width="1" height="1.2" fill="#8a9ebe"/>
<rect x="257" y="627.8" width="1" height="1.2" fill="#8a9ebe"/>
<rect x="258" y="628.0" width="1" height="1" fill="#8a9ebe"/>
<rect x="259" y="628.2" width="1" height="0.8" fill="#8a9ebe"/>
<rect x="260" y="628.0" width="1" height="1" fill="#8a9ebe"/>
<rect x="261" y="628.2" width="1" height="0.8" fill="#8a9ebe"/>
<rect x="262" y="628.0" width="1" height="1" fill="#8a9ebe"/>
<rect x="263" y="627.2" width="1" height="1.8" fill="#8a9ebe"/>
<rect x="264" y="628.0" width="1" height="1" fill="#8a9ebe"/>
<rect x="265" y="627.2" width="1" height="1.8" fill="#8a9ebe"/>
<rect x="266" y="627.8" width="1" height="1.2" fill="#8a9ebe"/>
<rect x="267" y="628.0" width="1" height="1" fill="#8a9ebe"/>
<rect x="268" y="628.0" width="1" height="1" fill="#8a9ebe"/>
<rect x="269" y="627.2" width="1" height="1.8" fill="#8a9ebe"/>
<rect x="270" y="628.0" width="1" height="1" fill="#8a9ebe"/>
<rect x="271" y="628.4" width="1" height="0.6" fill="#8a9ebe"/>
<rect x="272" y="627.2" width="1" height="1.8" fill="#8a9ebe"/>
<rect x="273" y="627.2" width="1" height="1.8" fill="#8a9ebe"/>
<rect x="274" y="628.4" width="1" height="0.6" fill="#8a9ebe"/>
<rect x="275" y="627.8" width="1" height="1.2" fill="#8a9ebe"/>
<rect x="276" y="627.5" width="1" height="1.5" fill="#8a9ebe"/>
<rect x="277" y="627.5" width="1" height="1.5" fill="#8a9ebe"/>
<rect x="278" y="628.2" width="1" height="0.8" fill="#8a9ebe"/>
<rect x="279" y="628.0" width="1" height="1" fill="#8a9ebe"/>
<rect x="280" y="627.8" width="1" height="1.2" fill="#8a9ebe"/>
<rect x="281" y="628.2" width="1" height="0.8" fill="#8a9ebe"/>
<rect x="282" y="627.5" width="1" height="1.5" fill="#8a9ebe"/>
<rect x="283" y="627.2" width="1" height="1.8" fill="#8a9ebe"/>
<rect x="284" y="628.0" width="1" height="1" fill="#8a9ebe"/>
<rect x="285" y="628.2" width="1" height="0.8" fill="#8a9ebe"/>
<rect x="286" y="628.0" width="1" height="1" fill="#8a9ebe"/>
<rect x="287" y="628.2" width="1" height="0.8" fill="#8a9ebe"/>
<rect x="288" y="627.5" width="1" height="1.5" fill="#8a9ebe"/>
<rect x="289" y="628.0" width="1" height="1" fill="#8a9ebe"/>
<rect x="290" y="627.5" width="1" height="1.5" fill="#8a9ebe"/>
<rect x="291" y="627.5" width="1" height="1.5" fill="#8a9ebe"/>
<rect x="292" y="628.4" width="1" height="0.6" fill="#8a9ebe"/>
<rect x="293" y="628.4" width="1" height="0.6" fill="#8a9ebe"/>
<rect x="294" y="627.8" width="1" height="1.2" fill="#8a9ebe"/>
<rect x="295" y="628.0" width="1" height="1" fill="#8a9ebe"/>
<rect x="296" y="628.0" width="1" height="1" fill="#8a9ebe"/>
<rect x="297" y="627.5" width="1" height="1.5" fill="#8a9ebe"/>
<rect x="298" y="627.2" width="1" height="1.8" fill="#8a9ebe"/>
<rect x="299" y="628.2" width="1" height="0.8" fill="#8a9ebe"/>
<rect x="300" y="628.0" width="1" height="1" fill="#8a9ebe"/>
<rect x="301" y="627.2" width="1" height="1.8" fill="#8a9ebe"/>
<rect x="302" y="627.2" width="1" height="1.8" fill="#8a9ebe"/>
<rect x="303" y="628.2" width="1" height="0.8" fill="#8a9ebe"/>
<rect x="304" y="628.4" width="1" height="0.6" fill="#8a9ebe"/>
<rect x="305" y="628.0" width="1" height="1" fill="#8a9ebe"/>
<rect x="306" y="627.5" width="1" height="1.5" fill="#8a9ebe"/>
<rect x="307" y="627.5" width="1" height="1.5" fill="#8a9ebe"/>
<rect x="308" y="628.2" width="1" height="0.8" fill="#8a9ebe"/>
<rect x="309" y="627.8" width="1" height="1.2" fill="#8a9ebe"/>
<rect x="310" y="628.0" width="1" height="1" fill="#8a9ebe"/>
<rect x="311" y="628.0" width="1" height="1" fill="#8a9ebe"/>
<rect x="312" y="628.2" width="1" height="0.8" fill="#8a9ebe"/>
<rect x="313" y="627.2" width="1" height="1.8" fill="#8a9ebe"/>
<rect x="314" y="628.4" width="1" height="0.6" fill="#8a9ebe"/>
<rect x="315" y="628.4" width="1" height="0.6" fill="#8a9ebe"/>
<rect x="316" y="627.8" width="1" height="1.2" fill="#8a9ebe"/>
<rect x="317" y="628.2" width="1" height="0.8" fill="#8a9ebe"/>
<rect x="318" y="628.0" width="1" height="1" fill="#8a9ebe"/>
<rect x="319" y="627.2" width="1" height="1.8" fill="#8a9ebe"/>
<rect x="320" y="627.2" width="1" height="1.8" fill="#8a9ebe"/>
<rect x="321" y="627.2" width="1" height="1.8" fill="#8a9ebe"/>
<rect x="322" y="627.8" width="1" height="1.2" fill="#8a9ebe"/>
<rect x="323" y="628.2" width="1" height="0.8" fill="#8a9ebe"/>
<rect x="324" y="627.2" width="1" height="1.8" fill="#8a9ebe"/>
<rect x="325" y="628.0" width="1" height="1" fill="#8a9ebe"/>
<rect x="326" y="628.0" width="1" height="1" fill="#8a9ebe"/>
<rect x="327" y="627.2" width="1" height="1.8" fill="#8a9ebe"/>
<rect x="328" y="627.2" width="1" height="1.8" fill="#8a9ebe"/>
<rect x="329" y="627.5" width="1" height="1.5" fill="#8a9ebe"/>
<rect x="330" y="628.4" width="1" height="0.6" fill="#8a9ebe"/>
<rect x="331" y="627.2" width="1" height="1.8" fill="#8a9ebe"/>
<rect x="332" y="627.8" width="1" height="1.2" fill="#8a9ebe"/>
<rect x="333" y="628.0" width="1" height="1" fill="#8a9ebe"/>
<rect x="334" y="627.8" width="1" height="1.2" fill="#8a9ebe"/>
<rect x="335" y="628.2" width="1" height="0.8" fill="#8a9ebe"/>
<rect x="336" y="628.0" width="1" height="1" fill="#8a9ebe"/>
<rect x="337" y="628.0" width="1" height="1" fill="#8a9ebe"/>
<rect x="338" y="627.8" width="1" height="1.2" fill="#8a9ebe"/>
<rect x="339" y="627.2" width="1" height="1.8" fill="#8a9ebe"/>
<rect x="340" y="627.2" width="1" height="1.8" fill="#8a9ebe"/>
<rect x="341" y="628.0" width="1" height="1" fill="#8a9ebe"/>
<rect x="342" y="628.0" width="1" height="1" fill="#8a9ebe"/>
<rect x="343" y="628.0" width="1" height="1" fill="#8a9ebe"/>
<rect x="344" y="627.5" width="1" height="1.5" fill="#8a9ebe"/>
<rect x="345" y="628.0" width="1" height="1" fill="#8a9ebe"/>
<rect x="346" y="628.0" width="1" height="1" fill="#8a9ebe"/>
<rect x="347" y="628.0" width="1" height="1" fill="#8a9ebe"/>
<rect x="348" y="627.8" width="1" height="1.2" fill="#8a9ebe"/>
<rect x="349" y="628.0" width="1" height="1" fill="#8a9ebe"/>
<rect x="350" y="628.4" width="1" height="0.6" fill="#8a9ebe"/>
<rect x="351" y="628.0" width="1" height="1" fill="#8a9ebe"/>
<rect x="352" y="628.2" width="1" height="0.8" fill="#8a9ebe"/>
<rect x="353" y="628.2" width="1" height="0.8" fill="#8a9ebe"/>
<rect x="354" y="628.4" width="1" height="0.6" fill="#8a9ebe"/>
<rect x="355" y="628.0" width="1" height="1" fill="#8a9ebe"/>
<rect x="356" y="627.2" width="1" height="1.8" fill="#8a9ebe"/>
<rect x="357" y="627.8" width="1" height="1.2" fill="#8a9ebe"/>
<rect x="358" y="627.8" width="1" height="1.2" fill="#8a9ebe"/>
<rect x="359" y="628.0" width="1" height="1" fill="#8a9ebe"/>
<rect x="360" y="627.8" width="1" height="1.2" fill="#8a9ebe"/>
<rect x="361" y="627.5" width="1" height="1.5" fill="#8a9ebe"/>
<rect x="362" y="628.2" width="1" height="0.8" fill="#8a9ebe"/>
<rect x="363" y="628.4" width="1" height="0.6" fill="#8a9ebe"/>
<rect x="364" y="627.5" width="1" height="1.5" fill="#8a9ebe"/>
<rect x="365" y="628.0" width="1" height="1" fill="#8a9ebe"/>
<rect x="366" y="627.2" width="1" height="1.8" fill="#8a9ebe"/>
<rect x="367" y="627.2" width="1" height="1.8" fill="#8a9ebe"/>
<rect x="368" y="627.5" width="1" height="1.5" fill="#8a9ebe"/>
<rect x="369" y="627.5" width="1" height="1.5" fill="#8a9ebe"/>
<rect x="370" y="627.8" width="1" height="1.2" fill="#8a9ebe"/>
<rect x="371" y="628.0" width="1" height="1" fill="#8a9ebe"/>
<rect x="372" y="627.8" width="1" height="1.2" fill="#8a9ebe"/>
<rect x="373" y="628.0" width="1" height="1" fill="#8a9ebe"/>
<rect x="374" y="628.2" width="1" height="0.8" fill="#8a9ebe"/>
<rect x="375" y="627.2" width="1" height="1.8" fill="#8a9ebe"/>
<rect x="376" y="628.4" width="1" height="0.6" fill="#8a9ebe"/>
<rect x="377" y="627.2" width="1" height="1.8" fill="#8a9ebe"/>
<rect x="378" y="627.8" width="1" height="1.2" fill="#8a9ebe"/>
<rect x="379" y="628.0" width="1" height="1" fill="#8a9ebe"/>
<rect x="380" y="628.4" width="1" height="0.6" fill="#8a9ebe"/>
<rect x="381" y="627.2" width="1" height="1.8" fill="#8a9ebe"/>
<rect x="382" y="628.2" width="1" height="0.8" fill="#8a9ebe"/>
<rect x="383" y="628.4" width="1" height="0.6" fill="#8a9ebe"/>
<rect x="384" y="628.4" width="1" height="0.6" fill="#8a9ebe"/>
<rect x="385" y="627.2" width="1" height="1.8" fill="#8a9ebe"/>
<rect x="386" y="627.5" width="1" height="1.5" fill="#8a9ebe"/>
<rect x="387" y="627.8" width="1" height="1.2" fill="#8a9ebe"/>
<rect x="388" y="628.2" width="1" height="0.8" fill="#8a9ebe"/>
<rect x="389" y="628.0" width="1" height="1" fill="#8a9ebe"/>
<rect x="390" y="627.8" width="1" height="1.2" fill="#8a9ebe"/>
<rect x="391" y="628.4" width="1" height="0.6" fill="#8a9ebe"/>
<rect x="392" y="628.4" width="1" height="0.6" fill="#8a9ebe"/>
<rect x="393" y="628.0" width="1" height="1" fill="#8a9ebe"/>
<rect x="394" y="627.5" width="1" height="1.5" fill="#8a9ebe"/>
<rect x="395" y="628.4" width="1" height="0.6" fill="#8a9ebe"/>
<rect x="396" y="628.2" width="1" height="0.8" fill="#8a9ebe"/>
<rect x="397" y="627.8" width="1" height="1.2" fill="#8a9ebe"/>
<rect x="398" y="628.0" width="1" height="1" fill="#8a9ebe"/>
<rect x="399" y="628.2" width="1" height="0.8" fill="#8a9ebe"/>
<rect x="400" y="627.5" width="1" height="1.5" fill="#8a9ebe"/>
<rect x="401" y="628.4" width="1" height="0.6" fill="#8a9ebe"/>
<rect x="402" y="627.8" width="1" height="1.2" fill="#8a9ebe"/>
<rect x="403" y="627.8" width="1" height="1.2" fill="#8a9ebe"/>
<rect x="404" y="628.0" width="1" height="1" fill="#8a9ebe"/>
<rect x="405" y="628.4" width="1" height="0.6" fill="#8a9ebe"/>
<rect x="406" y="627.8" width="1" height="1.2" fill="#8a9ebe"/>
<rect x="407" y="628.4" width="1" height="0.6" fill="#8a9ebe"/>
<rect x="408" y="628.0" width="1" height="1" fill="#8a9ebe"/>
<rect x="409" y="628.2" width="1" height="0.8" fill="#8a9ebe"/>
<rect x="410" y="628.0" width="1" height="1" fill="#8a9ebe"/>
<rect x="411" y="627.2" width="1" height="1.8" fill="#8a9ebe"/>
<rect x="412" y="627.8" width="1" height="1.2" fill="#8a9ebe"/>
<rect x="413" y="628.0" width="1" height="1" fill="#8a9ebe"/>
<rect x="414" y="627.2" width="1" height="1.8" fill="#8a9ebe"/>
<rect x="415" y="627.2" width="1" height="1.8" fill="#8a9ebe"/>
<rect x="416" y="628.4" width="1" height="0.6" fill="#8a9ebe"/>
<rect x="417" y="628.0" width="1" height="1" fill="#8a9ebe"/>
<rect x="418" y="628.2" width="1" height="0.8" fill="#8a9ebe"/>
<rect x="419" y="628.2" width="1" height="0.8" fill="#8a9ebe"/>
<rect x="420" y="628.4" width="1" height="0.6" fill="#8a9ebe"/>
<rect x="421" y="627.8" width="1" height="1.2" fill="#8a9ebe"/>
<rect x="422" y="627.2" width="1" height="1.8" fill="#8a9ebe"/>
<rect x="423" y="628.4" width="1" height="0.6" fill="#8a9ebe"/>
<rect x="424" y="628.2" width="1" height="0.8" fill="#8a9ebe"/>
<rect x="425" y="628.2" width="1" height="0.8" fill="#8a9ebe"/>
<rect x="426" y="627.2" width="1" height="1.8" fill="#8a9ebe"/>
<rect x="427" y="628.0" width="1" height="1" fill="#8a9ebe"/>
<rect x="428" y="627.2" width="1" height="1.8" fill="#8a9ebe"/>
<rect x="429" y="628.2" width="1" height="0.8" fill="#8a9ebe"/>
<rect x="430" y="627.2" width="1" height="1.8" fill="#8a9ebe"/>
<rect x="431" y="628.4" width="1" height="0.6" fill="#8a9ebe"/>
<rect x="432" y="628.0" width="1" height="1" fill="#8a9ebe"/>
<rect x="433" y="627.5" width="1" height="1.5" fill="#8a9ebe"/>
<rect x="434" y="627.8" width="1" height="1.2" fill="#8a9ebe"/>
<rect x="435" y="627.2" width="1" height="1.8" fill="#8a9ebe"/>
<rect x="436" y="628.0" width="1" height="1" fill="#8a9ebe"/>
<rect x="437" y="628.4" width="1" height="0.6" fill="#8a9ebe"/>
<rect x="438" y="627.2" width="1" height="1.8" fill="#8a9ebe"/>
<rect x="439" y="628.0" width="1" height="1" fill="#8a9ebe"/>
<rect x="440" y="628.2" width="1" height="0.8" fill="#8a9ebe"/>
<rect x="441" y="628.0" width="1" height="1" fill="#8a9ebe"/>
<rect x="442" y="627.8" width="1" height="1.2" fill="#8a9ebe"/>
<rect x="443" y="627.8" width="1" height="1.2" fill="#8a9ebe"/>
<rect x="444" y="627.8" width="1" height="1.2" fill="#8a9ebe"/>
<rect x="445" y="628.0" width="1" height="1" fill="#8a9ebe"/>
<rect x="446" y="628.4" width="1" height="0.6" fill="#8a9ebe"/>
<rect x="447" y="628.0" width="1" height="1" fill="#8a9ebe"/>
<rect x="448" y="628.0" width="1" height="1" fill="#8a9ebe"/>
<rect x="449" y="627.2" width="1" height="1.8" fill="#8a9ebe"/>
<rect x="450" y="627.2" width="1" height="1.8" fill="#8a9ebe"/>
<rect x="451" y="628.4" width="1" height="0.6" fill="#8a9ebe"/>
<rect x="452" y="627.2" width="1" height="1.8" fill="#8a9ebe"/>
<rect x="453" y="628.4" width="1" height="0.6" fill="#8a9ebe"/>
<rect x="454" y="627.2" width="1" height="1.8" fill="#8a9ebe"/>
<rect x="455" y="628.2" width="1" height="0.8" fill="#8a9ebe"/>
<rect x="456" y="628.4" width="1" height="0.6" fill="#8a9ebe"/>
<rect x="457" y="628.4" width="1" height="0.6" fill="#8a9ebe"/>
<rect x="458" y="628.4" width="1" height="0.6" fill="#8a9ebe"/>
<rect x="459" y="628.4" width="1" height="0.6" fill="#8a9ebe"/>
<rect x="460" y="628.0" width="1" height="1" fill="#8a9ebe"/>
<rect x="461" y="628.4" width="1" height="0.6" fill="#8a9ebe"/>
<rect x="462" y="627.2" width="1" height="1.8" fill="#8a9ebe"/>
<rect x="463" y="627.5" width="1" height="1.5" fill="#8a9ebe"/>
<rect x="464" y="628.4" width="1" height="0.6" fill="#8a9ebe"/>
<rect x="465" y="627.8" width="1" height="1.2" fill="#8a9ebe"/>
<rect x="466" y="627.8" width="1" height="1.2" fill="#8a9ebe"/>
<rect x="467" y="628.0" width="1" height="1" fill="#8a9ebe"/>
<rect x="468" y="628.0" width="1" height="1" fill="#8a9ebe"/>
<rect x="469" y="628.2" width="1" height="0.8" fill="#8a9ebe"/>
<rect x="470" y="628.0" width="1" height="1" fill="#8a9ebe"/>
<rect x="471" y="628.4" width="1" height="0.6" fill="#8a9ebe"/>
<rect x="472" y="628.0" width="1" height="1" fill="#8a9ebe"/>
<rect x="473" y="628.0" width="1" height="1" fill="#8a9ebe"/>
<rect x="474" y="627.5" width="1" height="1.5" fill="#8a9ebe"/>
<rect x="475" y="628.0" width="1" height="1" fill="#8a9ebe"/>
<rect x="476" y="627.8" width="1" height="1.2" fill="#8a9ebe"/>
<rect x="477" y="628.0" width="1" height="1" fill="#8a9ebe"/>
<rect x="478" y="628.0" width="1" height="1" fill="#8a9ebe"/>
<rect x="479" y="628.0" width="1" height="1" fill="#8a9ebe"/>
<rect x="480" y="628.2" width="1" height="0.8" fill="#8a9ebe"/>
<rect x="481" y="628.0" width="1" height="1" fill="#8a9ebe"/>
<rect x="482" y="628.0" width="1" height="1" fill="#8a9ebe"/>
<rect x="483" y="628.4" width="1" height="0.6" fill="#8a9ebe"/>
<rect x="484" y="628.2" width="1" height="0.8" fill="#8a9ebe"/>
<rect x="485" y="627.8" width="1" height="1.2" fill="#8a9ebe"/>
<rect x="486" y="628.4" width="1" height="0.6" fill="#8a9ebe"/>
<rect x="487" y="627.5" width="1" height="1.5" fill="#8a9ebe"/>
<rect x="488" y="627.5" width="1" height="1.5" fill="#8a9ebe"/>
<rect x="489" y="628.0" width="1" height="1" fill="#8a9ebe"/>
<rect x="490" y="627.2" width="1" height="1.8" fill="#8a9ebe"/>
<rect x="491" y="628.4" width="1" height="0.6" fill="#8a9ebe"/>
<rect x="492" y="627.8" width="1" height="1.2" fill="#8a9ebe"/>
<rect x="493" y="628.2" width="1" height="0.8" fill="#8a9ebe"/>
<rect x="494" y="628.4" width="1" height="0.6" fill="#8a9ebe"/>
<rect x="495" y="628.0" width="1" height="1" fill="#8a9ebe"/>
<rect x="496" y="628.0" width="1" height="1" fill="#8a9ebe"/>
<rect x="497" y="627.8" width="1" height="1.2" fill="#8a9ebe"/>
<rect x="498" y="627.5" width="1" height="1.5" fill="#8a9ebe"/>
<rect x="499" y="627.2" width="1" height="1.8" fill="#8a9ebe"/>
<rect x="500" y="627.8" width="1" height="1.2" fill="#8a9ebe"/>
<rect x="501" y="628.0" width="1" height="1" fill="#8a9ebe"/>
<rect x="502" y="627.5" width="1" height="1.5" fill="#8a9ebe"/>
<rect x="503" y="627.2" width="1" height="1.8" fill="#8a9ebe"/>
<rect x="504" y="628.4" width="1" height="0.6" fill="#8a9ebe"/>
<rect x="505" y="627.8" width="1" height="1.2" fill="#8a9ebe"/>
<rect x="506" y="628.0" width="1" height="1" fill="#8a9ebe"/>
<rect x="507" y="628.4" width="1" height="0.6" fill="#8a9ebe"/>
<rect x="508" y="628.0" width="1" height="1" fill="#8a9ebe"/>
<rect x="509" y="627.5" width="1" height="1.5" fill="#8a9ebe"/>
<rect x="510" y="628.0" width="1" height="1" fill="#8a9ebe"/>
<rect x="511" y="627.2" width="1" height="1.8" fill="#8a9ebe"/>
<rect x="512" y="627.5" width="1" height="1.5" fill="#8a9ebe"/>
<rect x="513" y="628.0" width="1" height="1" fill="#8a9ebe"/>
<rect x="514" y="628.0" width="1" height="1" fill="#8a9ebe"/>
<rect x="515" y="627.5" width="1" height="1.5" fill="#8a9ebe"/>
<rect x="516" y="628.0" width="1" height="1" fill="#8a9ebe"/>
<rect x="517" y="628.0" width="1" height="1" fill="#8a9ebe"/>
<rect x="518" y="628.4" width="1" height="0.6" fill="#8a9ebe"/>
<rect x="519" y="628.2" width="1" height="0.8" fill="#8a9ebe"/>
<rect x="520" y="628.2" width="1" height="0.8" fill="#8a9ebe"/>
<rect x="521" y="627.8" width="1" height="1.2" fill="#8a9ebe"/>
<rect x="522" y="628.0" width="1" height="1" fill="#8a9ebe"/>
<rect x="523" y="627.5" width="1" height="1.5" fill="#8a9ebe"/>
<rect x="524" y="627.8" width="1" height="1.2" fill="#8a9ebe"/>
<rect x="525" y="628.4" width="1" height="0.6" fill="#8a9ebe"/>
<rect x="526" y="627.2" width="1" height="1.8" fill="#8a9ebe"/>
<rect x="527" y="628.0" width="1" height="1" fill="#8a9ebe"/>
<rect x="528" y="628.2" width="1" height="0.8" fill="#8a9ebe"/>
<rect x="529" y="628.0" width="1" height="1" fill="#8a9ebe"/>
<rect x="530" y="628.2" width="1" height="0.8" fill="#8a9ebe"/>
<rect x="531" y="628.4" width="1" height="0.6" fill="#8a9ebe"/>
<rect x="532" y="628.0" width="1" height="1" fill="#8a9ebe"/>
<rect x="533" y="628.0" width="1" height="1" fill="#8a9ebe"/>
<rect x="534" y="627.8" width="1" height="1.2" fill="#8a9ebe"/>
<rect x="535" y="627.2" width="1" height="1.8" fill="#8a9ebe"/>
<rect x="536" y="627.2" width="1" height="1.8" fill="#8a9ebe"/>
<rect x="537" y="628.0" width="1" height="1" fill="#8a9ebe"/>
<rect x="538" y="628.4" width="1" height="0.6" fill="#8a9ebe"/>
<rect x="539" y="628.0" width="1" height="1" fill="#8a9ebe"/>
<rect x="540" y="627.5" width="1" height="1.5" fill="#8a9ebe"/>
<rect x="541" y="628.4" width="1" height="0.6" fill="#8a9ebe"/>
<rect x="542" y="627.2" width="1" height="1.8" fill="#8a9ebe"/>
<rect x="543" y="627.5" width="1" height="1.5" fill="#8a9ebe"/>
<rect x="544" y="627.5" width="1" height="1.5" fill="#8a9ebe"/>
<rect x="545" y="627.2" width="1" height="1.8" fill="#8a9ebe"/>
<rect x="546" y="627.8" width="1" height="1.2" fill="#8a9ebe"/>
<rect x="547" y="627.2" width="1" height="1.8" fill="#8a9ebe"/>
<rect x="548" y="628.0" width="1" height="1" fill="#8a9ebe"/>
<rect x="549" y="627.5" width="1" height="1.5" fill="#8a9ebe"/>
<rect x="550" y="628.4" width="1" height="0.6" fill="#8a9ebe"/>
<rect x="551" y="627.5" width="1" height="1.5" fill="#8a9ebe"/>
<rect x="552" y="628.0" width="1" height="1" fill="#8a9ebe"/>
<rect x="553" y="627.8" width="1" height="1.2" fill="#8a9ebe"/>
<rect x="554" y="627.8" width="1" height="1.2" fill="#8a9ebe"/>
<rect x="555" y="628.4" width="1" height="0.6" fill="#8a9ebe"/>
<rect x="556" y="627.2" width="1" height="1.8" fill="#8a9ebe"/>
<rect x="557" y="627.8" width="1" height="1.2" fill="#8a9ebe"/>
<rect x="558" y="627.5" width="1" height="1.5" fill="#8a9ebe"/>
<rect x="559" y="628.4" width="1" height="0.6" fill="#8a9ebe"/>
<rect x="560" y="628.0" width="1" height="1" fill="#8a9ebe"/>
<rect x="561" y="628.2" width="1" height="0.8" fill="#8a9ebe"/>
<rect x="562" y="628.2" width="1" height="0.8" fill="#8a9ebe"/>
<rect x="563" y="627.2" width="1" height="1.8" fill="#8a9ebe"/>
<rect x="564" y="628.0" width="1" height="1" fill="#8a9ebe"/>
<rect x="565" y="628.4" width="1" height="0.6" fill="#8a9ebe"/>
<rect x="566" y="627.8" width="1" height="1.2" fill="#8a9ebe"/>
<rect x="567" y="628.4" width="1" height="0.6" fill="#8a9ebe"/>
<rect x="568" y="627.8" width="1" height="1.2" fill="#8a9ebe"/>
<rect x="569" y="628.4" width="1" height="0.6" fill="#8a9ebe"/>
<rect x="570" y="627.5" width="1" height="1.5" fill="#8a9ebe"/>
<rect x="571" y="628.0" width="1" height="1" fill="#8a9ebe"/>
<rect x="572" y="628.2" width="1" height="0.8" fill="#8a9ebe"/>
<rect x="573" y="627.2" width="1" height="1.8" fill="#8a9ebe"/>
<rect x="574" y="628.4" width="1" height="0.6" fill="#8a9ebe"/>
<rect x="575" y="628.0" width="1" height="1" fill="#8a9ebe"/>
<rect x="576" y="627.2" width="1" height="1.8" fill="#8a9ebe"/>
<rect x="577" y="627.2" width="1" height="1.8" fill="#8a9ebe"/>
<rect x="578" y="628.4" width="1" height="0.6" fill="#8a9ebe"/>
<rect x="579" y="628.4" width="1" height="0.6" fill="#8a9ebe"/>
<rect x="580" y="627.2" width="1" height="1.8" fill="#8a9ebe"/>
<rect x="581" y="628.4" width="1" height="0.6" fill="#8a9ebe"/>
<rect x="582" y="627.5" width="1" height="1.5" fill="#8a9ebe"/>
<rect x="583" y="628.0" width="1" height="1" fill="#8a9ebe"/>
<rect x="584" y="627.2" width="1" height="1.8" fill="#8a9ebe"/>
<rect x="585" y="627.5" width="1" height="1.5" fill="#8a9ebe"/>
<rect x="586" y="628.0" width="1" height="1" fill="#8a9ebe"/>
<rect x="587" y="627.8" width="1" height="1.2" fill="#8a9ebe"/>
<rect x="588" y="628.0" width="1" height="1" fill="#8a9ebe"/>
<rect x="589" y="627.2" width="1" height="1.8" fill="#8a9ebe"/>
<rect x="590" y="628.4" width="1" height="0.6" fill="#8a9ebe"/>
<rect x="591" y="628.4" width="1" height="0.6" fill="#8a9ebe"/>
<rect x="592" y="627.2" width="1" height="1.8" fill="#8a9ebe"/>
<rect x="593" y="627.8" width="1" height="1.2" fill="#8a9ebe"/>
<rect x="594" y="627.8" width="1" height="1.2" fill="#8a9ebe"/>
<rect x="595" y="627.8" width="1" height="1.2" fill="#8a9ebe"/>
<rect x="596" y="627.5" width="1" height="1.5" fill="#8a9ebe"/>
<rect x="597" y="628.2" width="1" height="0.8" fill="#8a9ebe"/>
<rect x="598" y="628.4" width="1" height="0.6" fill="#8a9ebe"/>
<rect x="599" y="627.8" width="1" height="1.2" fill="#8a9ebe"/>
<rect x="600" y="627.5" width="1" height="1.5" fill="#8a9ebe"/>
<rect x="601" y="628.4" width="1" height="0.6" fill="#8a9ebe"/>
<rect x="602" y="627.8" width="1" height="1.2" fill="#8a9ebe"/>
<rect x="603" y="628.4" width="1" height="0.6" fill="#8a9ebe"/>
<rect x="604" y="627.8" width="1" height="1.2" fill="#8a9ebe"/>
<rect x="605" y="628.0" width="1" height="1" fill="#8a9ebe"/>
<rect x="606" y="627.2" width="1" height="1.8" fill="#8a9ebe"/>
<rect x="607" y="627.8" width="1" height="1.2" fill="#8a9ebe"/>
<rect x="608" y="628.2" width="1" height="0.8" fill="#8a9ebe"/>
<rect x="609" y="627.2" width="1" height="1.8" fill="#8a9ebe"/>
<rect x="610" y="628.4" width="1" height="0.6" fill="#8a9ebe"/>
<rect x="611" y="628.2" width="1" height="0.8" fill="#8a9ebe"/>
<rect x="612" y="628.2" width="1" height="0.8" fill="#8a9ebe"/>
<rect x="613" y="627.5" width="1" height="1.5" fill="#8a9ebe"/>
<rect x="614" y="628.2" width="1" height="0.8" fill="#8a9ebe"/>
<rect x="615" y="628.0" width="1" height="1" fill="#8a9ebe"/>
<rect x="616" y="627.8" width="1" height="1.2" fill="#8a9ebe"/>
<rect x="617" y="627.5" width="1" height="1.5" fill="#8a9ebe"/>
<rect x="618" y="627.2" width="1" height="1.8" fill="#8a9ebe"/>
<rect x="619" y="628.0" width="1" height="1" fill="#8a9ebe"/>
<rect x="620" y="628.0" width="1" height="1" fill="#8a9ebe"/>
<rect x="621" y="628.0" width="1" height="1" fill="#8a9ebe"/>
<rect x="622" y="627.8" width="1" height="1.2" fill="#8a9ebe"/>
<rect x="623" y="628.0" width="1" height="1" fill="#8a9ebe"/>
<rect x="624" y="628.0" width="1" height="1" fill="#8a9ebe"/>
<rect x="625" y="627.8" width="1" height="1.2" fill="#8a9ebe"/>
<rect x="626" y="628.0" width="1" height="1" fill="#8a9ebe"/>
<rect x="627" y="628.4" width="1" height="0.6" fill="#8a9ebe"/>
<rect x="628" y="628.0" width="1" height="1" fill="#8a9ebe"/>
<rect x="629" y="627.8" width="1" height="1.2" fill="#8a9ebe"/>
<rect x="630" y="628.2" width="1" height="0.8" fill="#8a9ebe"/>
<rect x="631" y="628.0" width="1" height="1" fill="#8a9ebe"/>
<rect x="632" y="627.2" width="1" height="1.8" fill="#8a9ebe"/>
<rect x="633" y="627.5" width="1" height="1.5" fill="#8a9ebe"/>
<rect x="634" y="628.2" width="1" height="0.8" fill="#8a9ebe"/>
<rect x="635" y="628.0" width="1" height="1" fill="#8a9ebe"/>
<rect x="636" y="627.5" width="1" height="1.5" fill="#8a9ebe"/>
<rect x="637" y="627.8" width="1" height="1.2" fill="#8a9ebe"/>
<rect x="638" y="627.2" width="1" height="1.8" fill="#8a9ebe"/>
<rect x="639" y="627.8" width="1" height="1.2" fill="#8a9ebe"/>
<rect x="640" y="627.5" width="1" height="1.5" fill="#8a9ebe"/>
<rect x="641" y="627.8" width="1" height="1.2" fill="#8a9ebe"/>
<rect x="642" y="627.5" width="1" height="1.5" fill="#8a9ebe"/>
<rect x="643" y="628.0" width="1" height="1" fill="#8a9ebe"/>
<rect x="644" y="628.2" width="1" height="0.8" fill="#8a9ebe"/>
<rect x="645" y="627.5" width="1" height="1.5" fill="#8a9ebe"/>
<rect x="646" y="628.0" width="1" height="1" fill="#8a9ebe"/>
<rect x="647" y="628.2" width="1" height="0.8" fill="#8a9ebe"/>
<rect x="648" y="628.2" width="1" height="0.8" fill="#8a9ebe"/>
<rect x="649" y="628.4" width="1" height="0.6" fill="#8a9ebe"/>
<rect x="650" y="628.0" width="1" height="1" fill="#8a9ebe"/>
<rect x="651" y="627.5" width="1" height="1.5" fill="#8a9ebe"/>
<rect x="652" y="628.0" width="1" height="1" fill="#8a9ebe"/>
<rect x="653" y="627.5" width="1" height="1.5" fill="#8a9ebe"/>
<rect x="654" y="627.8" width="1" height="1.2" fill="#8a9ebe"/>
<rect x="655" y="628.0" width="1" height="1" fill="#8a9ebe"/>
<rect x="656" y="627.8" width="1" height="1.2" fill="#8a9ebe"/>
<rect x="657" y="627.5" width="1" height="1.5" fill="#8a9ebe"/>
<rect x="658" y="627.2" width="1" height="1.8" fill="#8a9ebe"/>
<rect x="659" y="628.2" width="1" height="0.8" fill="#8a9ebe"/>
<rect x="660" y="628.2" width="1" height="0.8" fill="#8a9ebe"/>
<rect x="661" y="628.0" width="1" height="1" fill="#8a9ebe"/>
<rect x="662" y="627.2" width="1" height="1.8" fill="#8a9ebe"/>
<rect x="663" y="628.2" width="1" height="0.8" fill="#8a9ebe"/>
<rect x="664" y="628.2" width="1" height="0.8" fill="#8a9ebe"/>
<rect x="665" y="627.8" width="1" height="1.2" fill="#8a9ebe"/>
<rect x="666" y="627.8" width="1" height="1.2" fill="#8a9ebe"/>
<rect x="667" y="628.0" width="1" height="1" fill="#8a9ebe"/>
<rect x="668" y="628.2" width="1" height="0.8" fill="#8a9ebe"/>
<rect x="669" y="627.2" width="1" height="1.8" fill="#8a9ebe"/>
<rect x="670" y="627.5" width="1" height="1.5" fill="#8a9ebe"/>
<rect x="671" y="627.8" width="1" height="1.2" fill="#8a9ebe"/>
<rect x="672" y="627.2" width="1" height="1.8" fill="#8a9ebe"/>
<rect x="673" y="628.0" width="1" height="1" fill="#8a9ebe"/>
<rect x="674" y="627.5" width="1" height="1.5" fill="#8a9ebe"/>
<rect x="675" y="627.5" width="1" height="1.5" fill="#8a9ebe"/>
<rect x="676" y="627.2" width="1" height="1.8" fill="#8a9ebe"/>
<rect x="677" y="628.0" width="1" height="1" fill="#8a9ebe"/>
<rect x="678" y="627.8" width="1" height="1.2" fill="#8a9ebe"/>
<rect x="679" y="627.2" width="1" height="1.8" fill="#8a9ebe"/>
<rect x="680" y="627.8" width="1" height="1.2" fill="#8a9ebe"/>
<rect x="681" y="627.8" width="1" height="1.2" fill="#8a9ebe"/>
<rect x="682" y="628.0" width="1" height="1" fill="#8a9ebe"/>
<rect x="683" y="628.2" width="1" height="0.8" fill="#8a9ebe"/>
<rect x="684" y="628.0" width="1" height="1" fill="#8a9ebe"/>
<rect x="685" y="628.4" width="1" height="0.6" fill="#8a9ebe"/>
<rect x="686" y="628.0" width="1" height="1" fill="#8a9ebe"/>
<rect x="687" y="628.0" width="1" height="1" fill="#8a9ebe"/>
<rect x="688" y="627.2" width="1" height="1.8" fill="#8a9ebe"/>
<rect x="689" y="628.0" width="1" height="1" fill="#8a9ebe"/>
<rect x="690" y="628.2" width="1" height="0.8" fill="#8a9ebe"/>
<rect x="691" y="628.2" width="1" height="0.8" fill="#8a9ebe"/>
<rect x="692" y="627.8" width="1" height="1.2" fill="#8a9ebe"/>
<rect x="693" y="628.0" width="1" height="1" fill="#8a9ebe"/>
<rect x="694" y="628.2" width="1" height="0.8" fill="#8a9ebe"/>
<rect x="695" y="628.0" width="1" height="1" fill="#8a9ebe"/>
<rect x="696" y="628.0" width="1" height="1" fill="#8a9ebe"/>
<rect x="697" y="627.2" width="1" height="1.8" fill="#8a9ebe"/>
<rect x="698" y="627.2" width="1" height="1.8" fill="#8a9ebe"/>
<rect x="699" y="628.2" width="1" height="0.8" fill="#8a9ebe"/>
<rect x="700" y="628.0" width="1" height="1" fill="#8a9ebe"/>
<rect x="701" y="627.5" width="1" height="1.5" fill="#8a9ebe"/>
<rect x="702" y="628.0" width="1" height="1" fill="#8a9ebe"/>
<rect x="703" y="627.5" width="1" height="1.5" fill="#8a9ebe"/>
<rect x="704" y="627.8" width="1" height="1.2" fill="#8a9ebe"/>
<rect x="705" y="628.2" width="1" height="0.8" fill="#8a9ebe"/>
<rect x="706" y="628.0" width="1" height="1" fill="#8a9ebe"/>
<rect x="707" y="627.8" width="1" height="1.2" fill="#8a9ebe"/>
<rect x="708" y="627.2" width="1" height="1.8" fill="#8a9ebe"/>
<rect x="709" y="627.2" width="1" height="1.8" fill="#8a9ebe"/>
<rect x="710" y="627.5" width="1" height="1.5" fill="#8a9ebe"/>
<rect x="711" y="627.8" width="1" height="1.2" fill="#8a9ebe"/>
<rect x="712" y="628.4" width="1" height="0.6" fill="#8a9ebe"/>
<rect x="713" y="628.0" width="1" height="1" fill="#8a9ebe"/>
<rect x="714" y="627.5" width="1" height="1.5" fill="#8a9ebe"/>
<rect x="715" y="628.4" width="1" height="0.6" fill="#8a9ebe"/>
<rect x="716" y="627.2" width="1" height="1.8" fill="#8a9ebe"/>
<rect x="717" y="628.0" width="1" height="1" fill="#8a9ebe"/>
<rect x="718" y="627.2" width="1" height="1.8" fill="#8a9ebe"/>
<rect x="719" y="627.5" width="1" height="1.5" fill="#8a9ebe"/>
<rect x="720" y="628.4" width="1" height="0.6" fill="#8a9ebe"/>
<rect x="721" y="628.0" width="1" height="1" fill="#8a9ebe"/>
<rect x="722" y="628.2" width="1" height="0.8" fill="#8a9ebe"/>
<rect x="723" y="628.2" width="1" height="0.8" fill="#8a9ebe"/>
<rect x="724" y="627.5" width="1" height="1.5" fill="#8a9ebe"/>
<rect x="725" y="627.5" width="1" height="1.5" fill="#8a9ebe"/>
<rect x="726" y="627.2" width="1" height="1.8" fill="#8a9ebe"/>
<rect x="727" y="627.5" width="1" height="1.5" fill="#8a9ebe"/>
<rect x="728" y="628.4" width="1" height="0.6" fill="#8a9ebe"/>
<rect x="729" y="628.2" width="1" height="0.8" fill="#8a9ebe"/>
<rect x="730" y="627.2" width="1" height="1.8" fill="#8a9ebe"/>
<rect x="731" y="628.0" width="1" height="1" fill="#8a9ebe"/>
<rect x="732" y="628.2" width="1" height="0.8" fill="#8a9ebe"/>
<rect x="733" y="628.2" width="1" height="0.8" fill="#8a9ebe"/>
<rect x="734" y="627.2" width="1" height="1.8" fill="#8a9ebe"/>
<rect x="735" y="628.0" width="1" height="1" fill="#8a9ebe"/>
<rect x="736" y="628.2" width="1" height="0.8" fill="#8a9ebe"/>
<rect x="737" y="628.2" width="1" height="0.8" fill="#8a9ebe"/>
<rect x="738" y="627.8" width="1" height="1.2" fill="#8a9ebe"/>
<rect x="739" y="627.5" width="1" height="1.5" fill="#8a9ebe"/>
<rect x="740" y="627.5" width="1" height="1.5" fill="#8a9ebe"/>
<rect x="741" y="627.2" width="1" height="1.8" fill="#8a9ebe"/>
<rect x="742" y="628.4" width="1" height="0.6" fill="#8a9ebe"/>
<rect x="743" y="628.0" width="1" height="1" fill="#8a9ebe"/>
<rect x="744" y="628.2" width="1" height="0.8" fill="#8a9ebe"/>
<rect x="745" y="627.2" width="1" height="1.8" fill="#8a9ebe"/>
<rect x="746" y="628.4" width="1" height="0.6" fill="#8a9ebe"/>
<rect x="747" y="628.0" width="1" height="1" fill="#8a9ebe"/>
<rect x="748" y="628.2" width="1" height="0.8" fill="#8a9ebe"/>
<rect x="749" y="628.0" width="1" height="1" fill="#8a9ebe"/>
<rect x="750" y="628.4" width="1" height="0.6" fill="#8a9ebe"/>
<rect x="751" y="627.5" width="1" height="1.5" fill="#8a9ebe"/>
<rect x="752" y="627.2" width="1" height="1.8" fill="#8a9ebe"/>
<rect x="753" y="628.4" width="1" height="0.6" fill="#8a9ebe"/>
<rect x="754" y="628.4" width="1" height="0.6" fill="#8a9ebe"/>
<rect x="755" y="628.4" width="1" height="0.6" fill="#8a9ebe"/>
<rect x="756" y="628.0" width="1" height="1" fill="#8a9ebe"/>
<rect x="757" y="627.2" width="1" height="1.8" fill="#8a9ebe"/>
<rect x="758" y="628.0" width="1" height="1" fill="#8a9ebe"/>
<rect x="759" y="628.4" width="1" height="0.6" fill="#8a9ebe"/>
<rect x="760" y="628.0" width="1" height="1" fill="#8a9ebe"/>
<rect x="761" y="628.0" width="1" height="1" fill="#8a9ebe"/>
<rect x="762" y="627.8" width="1" height="1.2" fill="#8a9ebe"/>
<rect x="763" y="627.5" width="1" height="1.5" fill="#8a9ebe"/>
<rect x="764" y="627.5" width="1" height="1.5" fill="#8a9ebe"/>
<rect x="765" y="628.0" width="1" height="1" fill="#8a9ebe"/>
<rect x="766" y="628.4" width="1" height="0.6" fill="#8a9ebe"/>
<rect x="767" y="628.4" width="1" height="0.6" fill="#8a9ebe"/>
<rect x="768" y="628.0" width="1" height="1" fill="#8a9ebe"/>
<rect x="769" y="628.0" width="1" height="1" fill="#8a9ebe"/>
<rect x="770" y="628.0" width="1" height="1" fill="#8a9ebe"/>
<rect x="771" y="628.0" width="1" height="1" fill="#8a9ebe"/>
<rect x="772" y="628.0" width="1" height="1" fill="#8a9ebe"/>
<rect x="773" y="628.4" width="1" height="0.6" fill="#8a9ebe"/>
<rect x="774" y="628.2" width="1" height="0.8" fill="#8a9ebe"/>
<rect x="775" y="627.5" width="1" height="1.5" fill="#8a9ebe"/>
<rect x="776" y="627.8" width="1" height="1.2" fill="#8a9ebe"/>
<rect x="777" y="627.5" width="1" height="1.5" fill="#8a9ebe"/>
<rect x="778" y="628.0" width="1" height="1" fill="#8a9ebe"/>
<rect x="779" y="628.0" width="1" height="1" fill="#8a9ebe"/>
<rect x="780" y="628.2" width="1" height="0.8" fill="#8a9ebe"/>
<rect x="781" y="627.8" width="1" height="1.2" fill="#8a9ebe"/>
<rect x="782" y="628.0" width="1" height="1" fill="#8a9ebe"/>
<rect x="783" y="628.4" width="1" height="0.6" fill="#8a9ebe"/>
<rect x="784" y="628.0" width="1" height="1" fill="#8a9ebe"/>
<rect x="785" y="628.4" width="1" height="0.6" fill="#8a9ebe"/>
<rect x="786" y="627.5" width="1" height="1.5" fill="#8a9ebe"/>
<rect x="787" y="628.0" width="1" height="1" fill="#8a9ebe"/>
<rect x="788" y="628.4" width="1" height="0.6" fill="#8a9ebe"/>
<rect x="789" y="628.0" width="1" height="1" fill="#8a9ebe"/>
<rect x="790" y="627.8" width="1" height="1.2" fill="#8a9ebe"/>
<rect x="29.15" y="592.7" width="1.7" height="36.3" fill="#7f95b6"/>
<rect x="36.95" y="621.0" width="1.7" height="8.0" fill="#7f95b6"/>
<rect x="41.75" y="624.2" width="1.7" height="4.8" fill="#7f95b6"/>
<rect x="43.25" y="624.9" width="1.7" height="4.1" fill="#7f95b6"/>
<rect x="45.85" y="624.9" width="1.7" height="4.1" fill="#7f95b6"/>
<rect x="49.75" y="623.3" width="1.7" height="5.7" fill="#7f95b6"/>
<rect x="51.25" y="615.3" width="1.7" height="13.7" fill="#7f95b6"/>
<rect x="54.25" y="626.6" width="1.7" height="2.4" fill="#7f95b6"/>
<rect x="61.45" y="627.3" width="1.7" height="1.7" fill="#7f95b6"/>
<rect x="72.85" y="623.3" width="1.7" height="5.7" fill="#7f95b6"/>
<rect x="75.15" y="622.1" width="1.7" height="6.9" fill="#7f95b6"/>
<rect x="79.95" y="626.3" width="1.7" height="2.7" fill="#7f95b6"/>
<rect x="83.95" y="623.9" width="1.7" height="5.1" fill="#7f95b6"/>
<rect x="88.05" y="621.3" width="1.7" height="7.7" fill="#7f95b6"/>
<rect x="90.15" y="625.1" width="1.7" height="3.9" fill="#7f95b6"/>
<rect x="92.55" y="623.9" width="1.7" height="5.1" fill="#7f95b6"/>
<rect x="94.35" y="620.4" width="1.7" height="8.6" fill="#7f95b6"/>
<rect x="103.35" y="627.3" width="1.7" height="1.7" fill="#7f95b6"/>
<rect x="108.05" y="626.9" width="1.7" height="2.1" fill="#7f95b6"/>
<rect x="111.65" y="625.7" width="1.7" height="3.3" fill="#7f95b6"/>
<rect x="116.45" y="626.3" width="1.7" height="2.7" fill="#7f95b6"/>
<rect x="143.25" y="625.1" width="1.7" height="3.9" fill="#7f95b6"/>
<rect x="154.55" y="620.6" width="1.7" height="8.4" fill="#7f95b6"/>
<rect x="156.95" y="625.7" width="1.7" height="3.3" fill="#7f95b6"/>
<rect x="160.85" y="624.9" width="1.7" height="4.1" fill="#7f95b6"/>
<rect x="172.85" y="625.1" width="1.7" height="3.9" fill="#7f95b6"/>
<rect x="177.75" y="559.2" width="1.7" height="69.8" fill="#7f95b6"/>
<rect x="182.35" y="608.4" width="1.7" height="20.6" fill="#7f95b6"/>
<rect x="186.35" y="617.9" width="1.7" height="11.1" fill="#7f95b6"/>
<rect x="205.15" y="626.3" width="1.7" height="2.7" fill="#7f95b6"/>
<rect x="207.55" y="626.1" width="1.7" height="2.9" fill="#7f95b6"/>
<rect x="211.05" y="625.1" width="1.7" height="3.9" fill="#7f95b6"/>
<rect x="217.95" y="624.5" width="1.7" height="4.5" fill="#7f95b6"/>
<rect x="221.85" y="624.5" width="1.7" height="4.5" fill="#7f95b6"/>
<rect x="226.65" y="626.3" width="1.7" height="2.7" fill="#7f95b6"/>
<rect x="287.75" y="624.6" width="1.7" height="4.4" fill="#7f95b6"/>
<rect x="289.45" y="613.9" width="1.7" height="15.1" fill="#7f95b6"/>
<rect x="292.35" y="609.2" width="1.7" height="19.8" fill="#7f95b6"/>
<rect x="364.85" y="612.1" width="1.7" height="16.9" fill="#7f95b6"/>
<rect x="499.45" y="612.1" width="1.7" height="16.9" fill="#7f95b6"/>
<rect x="545.05" y="626.0" width="1.7" height="3.0" fill="#7f95b6"/>
<rect x="684.15" y="626.2" width="1.7" height="2.8" fill="#7f95b6"/>
<rect x="704.15" y="625.3" width="1.7" height="3.7" fill="#7f95b6"/>
<rect x="707.45" y="625.8" width="1.7" height="3.2" fill="#7f95b6"/>
<rect x="711.75" y="626.2" width="1.7" height="2.8" fill="#7f95b6"/>
<rect x="714.05" y="625.5" width="1.7" height="3.5" fill="#7f95b6"/>
<rect x="717.35" y="623.6" width="1.7" height="5.4" fill="#7f95b6"/>
<rect x="719.05" y="617.6" width="1.7" height="11.4" fill="#7f95b6"/>
<rect x="725.25" y="597.2" width="1.7" height="31.8" fill="#7f95b6"/>
<rect x="760.75" y="625.5" width="1.7" height="3.5" fill="#7f95b6"/>
<rect x="763.15" y="625.3" width="1.7" height="3.7" fill="#7f95b6"/>
<line x1="29.5" y1="628.4" x2="791.5" y2="628.4" stroke="#8398b8" stroke-width="1.4"/>
<text transform="translate(797.3,576.6) scale(1.08,1)" class="ax">50k</text>
<text transform="translate(797.3,604.6) scale(1.08,1)" class="ax">25k</text>
<text transform="translate(797.3,632.8) scale(1.08,1)" class="ax">0</text>
<rect x="433.5" y="432.5" width="361" height="21" rx="3" fill="#eaeaea" stroke="#c4c4c4" stroke-width="1"/>
<line x1="468.5" y1="433" x2="468.5" y2="453" stroke="#cfcfcf" stroke-width="1"/>
<line x1="503.5" y1="433" x2="503.5" y2="453" stroke="#cfcfcf" stroke-width="1"/>
<line x1="538.5" y1="433" x2="538.5" y2="453" stroke="#cfcfcf" stroke-width="1"/>
<line x1="574.5" y1="433" x2="574.5" y2="453" stroke="#cfcfcf" stroke-width="1"/>
<line x1="615.5" y1="433" x2="615.5" y2="453" stroke="#cfcfcf" stroke-width="1"/>
<line x1="647.5" y1="433" x2="647.5" y2="453" stroke="#cfcfcf" stroke-width="1"/>
<line x1="680.5" y1="433" x2="680.5" y2="453" stroke="#cfcfcf" stroke-width="1"/>
<line x1="713.5" y1="433" x2="713.5" y2="453" stroke="#cfcfcf" stroke-width="1"/>
<text x="451.0" y="447" class="bt" text-anchor="middle">5D</text>
<text x="486.0" y="447" class="bt" text-anchor="middle">1M</text>
<text x="521.0" y="447" class="bt" text-anchor="middle">3M</text>
<text x="556.5" y="447" class="bt" text-anchor="middle">6M</text>
<text x="595.0" y="447" class="bt" text-anchor="middle">YTD</text>
<text x="631.5" y="447" class="bt" text-anchor="middle">1Y</text>
<text x="664.0" y="447" class="bt" text-anchor="middle">3Y</text>
<text x="697.0" y="447" class="bt" text-anchor="middle">5Y</text>
<text x="733.5" y="447" class="bt" text-anchor="middle">10Y</text>
<rect x="753.5" y="432.5" width="41" height="21" rx="3" fill="#fdfdfd" stroke="#a0a0a0" stroke-width="1"/>
<rect x="755.8" y="434.8" width="36.4" height="16.4" rx="3" fill="#9b9b9b" stroke="#111" stroke-width="2.2"/>
<text x="774" y="447.2" class="mx" text-anchor="middle">Max</text>
</svg>
</body></html>
